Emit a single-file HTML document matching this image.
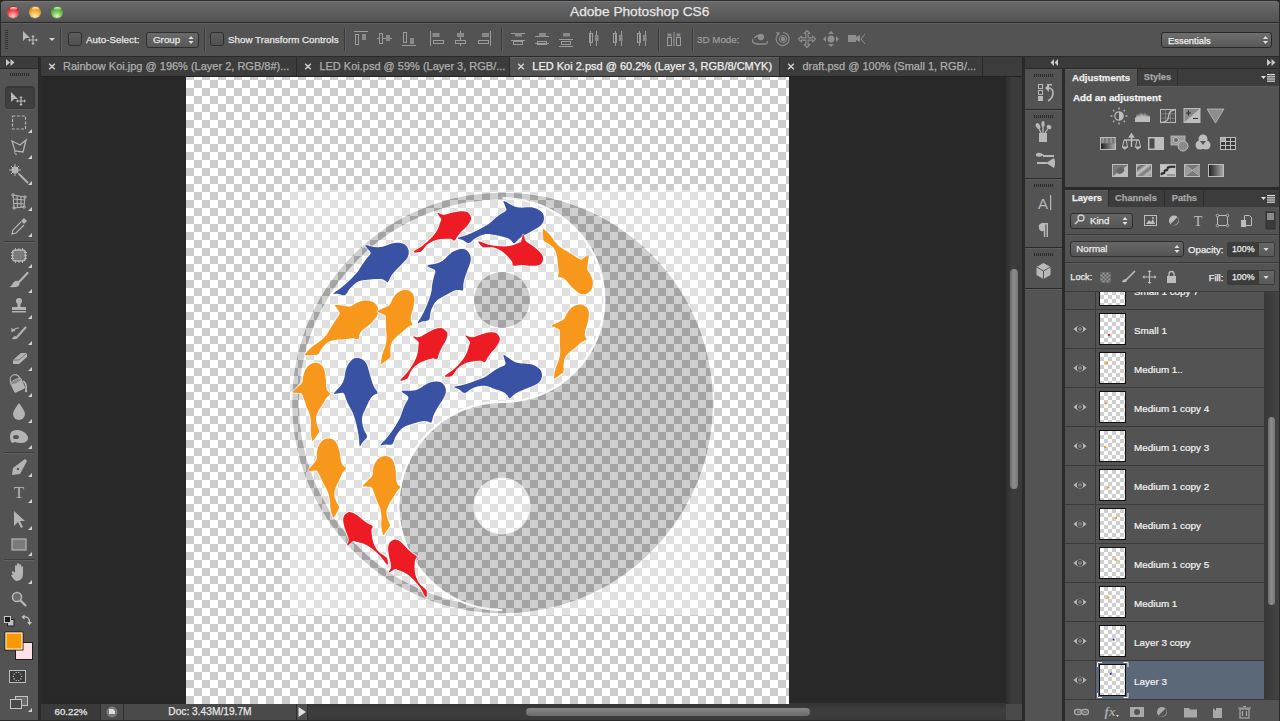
<!DOCTYPE html>
<html><head><meta charset="utf-8">
<style>
*{margin:0;padding:0;box-sizing:border-box}
html,body{width:1280px;height:721px;overflow:hidden;background:#282828;font-family:"Liberation Sans",sans-serif;font-size:11px;color:#e6e6e6}
.a{position:absolute}
.t{position:absolute;white-space:nowrap;line-height:1;-webkit-text-stroke-width:0.25px}
</style></head><body>
<div class="a" style="left:0px;top:0px;width:1280px;height:23px;background:#1e1e1e"></div>
<div class="a" style="left:0px;top:0px;width:1280px;height:22px;background:linear-gradient(#6a6a6a,#525252);border-top:1px solid #2e2e2e;border-radius:5px 5px 0 0;box-shadow:inset 0 1px 0 #777"></div>
<div class="a" style="left:0px;top:22px;width:1280px;height:1px;background:#2a2a2a"></div>
<div class="a" style="left:7px;top:6px;width:12px;height:12px;border-radius:50%;background:radial-gradient(circle at 50% 85%,#ffc8c8,#e8383a 55%,#8a1a16 100%);box-shadow:0 1px 0 rgba(255,255,255,0.18)"></div>
<div class="a" style="left:9.5px;top:6.8px;width:7px;height:3.2px;border-radius:50%;background:linear-gradient(rgba(255,255,255,0.9),rgba(255,255,255,0.1))"></div>
<div class="a" style="left:29px;top:6px;width:12px;height:12px;border-radius:50%;background:radial-gradient(circle at 50% 85%,#fff0a8,#eda22a 55%,#9a5e10 100%);box-shadow:0 1px 0 rgba(255,255,255,0.18)"></div>
<div class="a" style="left:31.5px;top:6.8px;width:7px;height:3.2px;border-radius:50%;background:linear-gradient(rgba(255,255,255,0.9),rgba(255,255,255,0.1))"></div>
<div class="a" style="left:51px;top:6px;width:12px;height:12px;border-radius:50%;background:radial-gradient(circle at 50% 85%,#d8f8b8,#5cb43a 55%,#2a6a16 100%);box-shadow:0 1px 0 rgba(255,255,255,0.18)"></div>
<div class="a" style="left:53.5px;top:6.8px;width:7px;height:3.2px;border-radius:50%;background:linear-gradient(rgba(255,255,255,0.9),rgba(255,255,255,0.1))"></div>
<div class="t" style="left:570px;top:5.30px;font-size:13.7px;color:#e6e6e6;font-weight:normal;">Adobe Photoshop CS6</div>
<div class="a" style="left:0px;top:23px;width:1280px;height:33px;background:#535353;border-top:1px solid #5f5f5f"></div>
<div class="a" style="left:0px;top:0px;width:1px;height:57px;background:#2a2a2a"></div>
<div class="a" style="left:1279px;top:0px;width:1px;height:57px;background:#2a2a2a"></div>
<div class="a" style="left:0px;top:56px;width:1280px;height:1px;background:#2a2a2a"></div>
<div class="a" style="left:60px;top:28px;width:1px;height:23px;background:#3a3a3a;box-shadow:1px 0 0 #606060"></div>
<div class="a" style="left:204px;top:28px;width:1px;height:23px;background:#3a3a3a;box-shadow:1px 0 0 #606060"></div>
<div class="a" style="left:344px;top:28px;width:1px;height:23px;background:#3a3a3a;box-shadow:1px 0 0 #606060"></div>
<div class="a" style="left:501px;top:28px;width:1px;height:23px;background:#3a3a3a;box-shadow:1px 0 0 #606060"></div>
<div class="a" style="left:658px;top:28px;width:1px;height:23px;background:#3a3a3a;box-shadow:1px 0 0 #606060"></div>
<div class="a" style="left:692px;top:28px;width:1px;height:23px;background:#3a3a3a;box-shadow:1px 0 0 #606060"></div>
<div class="a" style="left:68px;top:32px;width:14px;height:14px;border-radius:3px;border:1px solid #2e2e2e;background:linear-gradient(#5e5e5e,#505050)"></div>
<div class="t" style="left:86px;top:34.80px;font-size:9.8px;color:#e6e6e6;font-weight:normal;">Auto-Select:</div>
<div class="a" style="left:146px;top:32px;width:53px;height:16px;border-radius:3px;border:1px solid #2e2e2e;background:linear-gradient(#6a6a6a,#585858)"></div>
<div class="t" style="left:153px;top:34.80px;font-size:9.8px;color:#e6e6e6;font-weight:normal;">Group</div>
<div class="a" style="left:210px;top:32px;width:14px;height:14px;border-radius:3px;border:1px solid #2e2e2e;background:linear-gradient(#5e5e5e,#505050)"></div>
<div class="t" style="left:228px;top:34.80px;font-size:9.8px;color:#e6e6e6;font-weight:normal;">Show Transform Controls</div>
<div class="t" style="left:697px;top:34.80px;font-size:9.8px;color:#9a9a9a;font-weight:normal;">3D Mode:</div>
<div class="a" style="left:1161px;top:32px;width:111px;height:16px;border-radius:3px;border:1px solid #2a2a2a;background:linear-gradient(#6e6e6e,#585858)"></div>
<div class="t" style="left:1168px;top:36.14px;font-size:9.4px;color:#f0f0f0;font-weight:normal;">Essentials</div>
<div class="a" style="left:0px;top:57px;width:38px;height:664px;background:#535353"></div>
<div class="a" style="left:0px;top:57px;width:38px;height:11px;background:#3c3c3c"></div>
<div class="a" style="left:0px;top:68px;width:38px;height:1px;background:#2c2c2c"></div>
<div class="a" style="left:38px;top:57px;width:3px;height:664px;background:#2a2a2a"></div>
<div class="a" style="left:5px;top:86px;width:30px;height:23px;border-radius:3px;background:#3f3f3f;border:1px solid #383838;box-shadow:inset 0 1px 0 #353535, 0 1px 0 #5e5e5e"></div>
<div class="a" style="left:4px;top:241px;width:30px;height:1px;background:#3c3c3c;box-shadow:0 1px 0 #606060"></div>
<div class="a" style="left:4px;top:452px;width:30px;height:1px;background:#3c3c3c;box-shadow:0 1px 0 #606060"></div>
<div class="a" style="left:4px;top:559px;width:30px;height:1px;background:#3c3c3c;box-shadow:0 1px 0 #606060"></div>
<div class="a" style="left:41px;top:57px;width:981px;height:19px;background:#3c3c3c"></div>
<div class="a" style="left:41px;top:76px;width:981px;height:1px;background:#232323"></div>
<div class="a" style="left:296px;top:57px;width:1px;height:19px;background:#2a2a2a"></div>
<div class="a" style="left:509px;top:57px;width:1px;height:19px;background:#2a2a2a"></div>
<div class="a" style="left:779px;top:57px;width:1px;height:19px;background:#2a2a2a"></div>
<div class="a" style="left:982px;top:57px;width:1px;height:19px;background:#2a2a2a"></div>
<div class="a" style="left:510px;top:57px;width:269px;height:19px;background:#535353;border-top:1px solid #606060"></div>
<div class="t" style="left:63px;top:61.19px;font-size:11px;color:#aeaeae;font-weight:normal;">Rainbow Koi.jpg @ 196% (Layer 2, RGB/8#)...</div>
<div class="t" style="left:319.4px;top:61.19px;font-size:11px;color:#aeaeae;font-weight:normal;">LED Koi.psd @ 59% (Layer 3, RGB/...</div>
<div class="t" style="left:532.3px;top:61.19px;font-size:11px;color:#f0f0f0;font-weight:normal;">LED Koi 2.psd @ 60.2% (Layer 3, RGB/8/CMYK)</div>
<div class="t" style="left:802.4px;top:61.19px;font-size:11px;color:#aeaeae;font-weight:normal;">draft.psd @ 100% (Small 1, RGB/...</div>
<div class="a" style="left:1006px;top:77px;width:16px;height:627px;background:linear-gradient(90deg,#2e2e2e,#3c3c3c 40%,#3a3a3a)"></div>
<div class="a" style="left:1010px;top:269px;width:8px;height:220px;border-radius:4px;background:linear-gradient(90deg,#6e6e6e,#8c8c8c 50%,#767676)"></div>
<div class="a" style="left:41px;top:703px;width:965px;height:18px;background:linear-gradient(#333,#3e3e3e 40%,#3a3a3a)"></div>
<div class="a" style="left:41px;top:703px;width:259px;height:1px;background:#262626"></div>
<div class="a" style="left:41px;top:704px;width:59px;height:16px;background:#3a3a3a"></div>
<div class="a" style="left:100px;top:704px;width:24px;height:16px;background:#4a4a4a;border-left:1px solid #2e2e2e;border-right:1px solid #2e2e2e"></div>
<div class="a" style="left:124px;top:704px;width:172px;height:16px;background:#4a4a4a"></div>
<div class="a" style="left:296px;top:704px;width:12px;height:16px;background:#4e4e4e;border-left:1px solid #2e2e2e;border-right:1px solid #2e2e2e"></div>
<div class="a" style="left:526px;top:708px;width:284px;height:8px;border-radius:4px;background:linear-gradient(#858585,#6c6c6c)"></div>
<div class="a" style="left:1006px;top:704px;width:16px;height:16px;background:#4a4a4a"></div>
<div class="a" style="left:0px;top:720px;width:1022px;height:1px;background:#2a2a2a"></div>
<div class="t" style="left:54.6px;top:707.09px;font-size:9.7px;color:#e6e6e6;font-weight:normal;">60.22%</div>
<div class="t" style="left:168.3px;top:706.67px;font-size:10.2px;color:#e6e6e6;font-weight:normal;">Doc: 3.43M/19.7M</div>
<div class="a" style="left:1022px;top:57px;width:258px;height:664px;background:#2a2a2a"></div>
<div class="a" style="left:1025px;top:57px;width:254px;height:11px;background:#3a3a3a"></div>
<div class="a" style="left:1025px;top:69px;width:37px;height:652px;background:#535353"></div>
<div class="a" style="left:1025px;top:109px;width:37px;height:1px;background:#2a2a2a"></div>
<div class="a" style="left:1025px;top:110px;width:37px;height:1px;background:#5e5e5e"></div>
<div class="a" style="left:1025px;top:178px;width:37px;height:1px;background:#2a2a2a"></div>
<div class="a" style="left:1025px;top:179px;width:37px;height:1px;background:#5e5e5e"></div>
<div class="a" style="left:1025px;top:247px;width:37px;height:1px;background:#2a2a2a"></div>
<div class="a" style="left:1025px;top:248px;width:37px;height:1px;background:#5e5e5e"></div>
<div class="a" style="left:1025px;top:288px;width:37px;height:1px;background:#2a2a2a"></div>
<div class="a" style="left:1025px;top:289px;width:37px;height:1px;background:#5e5e5e"></div>
<div class="a" style="left:1279px;top:57px;width:1px;height:664px;background:#2a2a2a"></div>
<div class="a" style="left:1065px;top:69px;width:214px;height:17px;background:#3c3c3c"></div>
<div class="a" style="left:1065px;top:69px;width:72px;height:18px;background:#535353;border-top:1px solid #5e5e5e"></div>
<div class="a" style="left:1137px;top:69px;width:1px;height:17px;background:#2e2e2e"></div>
<div class="a" style="left:1177px;top:69px;width:1px;height:17px;background:#2e2e2e"></div>
<div class="a" style="left:1065px;top:86px;width:214px;height:101px;background:#535353"></div>
<div class="a" style="left:1138px;top:86px;width:141px;height:1px;background:#5a5a5a"></div>
<div class="t" style="left:1072px;top:72.52px;font-size:9.6px;color:#ececec;font-weight:bold;">Adjustments</div>
<div class="t" style="left:1143.7px;top:72.78px;font-size:9.3px;color:#a6a6a6;font-weight:bold;">Styles</div>
<div class="t" style="left:1073px;top:92.50px;font-size:9.8px;color:#f2f2f2;font-weight:bold;">Add an adjustment</div>
<div class="a" style="left:1065px;top:190px;width:214px;height:17px;background:#3c3c3c"></div>
<div class="a" style="left:1065px;top:190px;width:43px;height:18px;background:#535353;border-top:1px solid #5e5e5e"></div>
<div class="a" style="left:1108px;top:190px;width:1px;height:17px;background:#2e2e2e"></div>
<div class="a" style="left:1164px;top:190px;width:1px;height:17px;background:#2e2e2e"></div>
<div class="a" style="left:1203px;top:190px;width:1px;height:17px;background:#2e2e2e"></div>
<div class="a" style="left:1065px;top:207px;width:214px;height:514px;background:#535353"></div>
<div class="t" style="left:1072px;top:194.13px;font-size:9.3px;color:#ececec;font-weight:bold;">Layers</div>
<div class="t" style="left:1115px;top:194.13px;font-size:9.3px;color:#a6a6a6;font-weight:bold;">Channels</div>
<div class="t" style="left:1171.7px;top:194.13px;font-size:9.3px;color:#a6a6a6;font-weight:bold;">Paths</div>
<div class="a" style="left:1065px;top:234px;width:214px;height:1px;background:#3a3a3a"></div>
<div class="a" style="left:1065px;top:235px;width:214px;height:1px;background:#5c5c5c"></div>
<div class="a" style="left:1065px;top:262px;width:214px;height:1px;background:#3a3a3a"></div>
<div class="a" style="left:1065px;top:263px;width:214px;height:1px;background:#5c5c5c"></div>
<div class="a" style="left:1065px;top:291px;width:214px;height:1px;background:#3a3a3a"></div>
<div class="a" style="left:1065px;top:292px;width:214px;height:1px;background:#5c5c5c"></div>
<div class="a" style="left:1070px;top:213px;width:63px;height:16px;border-radius:3px;border:1px solid #2e2e2e;background:linear-gradient(#666,#555)"></div>
<div class="t" style="left:1090px;top:215.59px;font-size:9.7px;color:#ececec;font-weight:normal;">Kind</div>
<div class="a" style="left:1070px;top:241px;width:114px;height:16px;border-radius:3px;border:1px solid #2e2e2e;background:linear-gradient(#666,#555)"></div>
<div class="t" style="left:1076.3px;top:243.59px;font-size:9.7px;color:#ececec;font-weight:normal;">Normal</div>
<div class="t" style="left:1188px;top:244.79px;font-size:9.7px;color:#ececec;font-weight:normal;">Opacity:</div>
<div class="t" style="left:1070.3px;top:272.71px;font-size:9.2px;color:#ececec;font-weight:normal;">Lock:</div>
<div class="t" style="left:1208.7px;top:272.54px;font-size:9.4px;color:#ececec;font-weight:normal;">Fill:</div>
<div class="a" style="left:1227px;top:242px;width:48px;height:15px;border-radius:2px;border:1px solid #3a3a3a;background:#3c3c3c"></div>
<div class="a" style="left:1259px;top:243px;width:15px;height:13px;background:linear-gradient(#666,#5a5a5a)"></div>
<div class="a" style="left:1227px;top:270px;width:48px;height:15px;border-radius:2px;border:1px solid #3a3a3a;background:#3c3c3c"></div>
<div class="a" style="left:1259px;top:271px;width:15px;height:13px;background:linear-gradient(#666,#5a5a5a)"></div>
<div class="t" style="left:1231.9px;top:245.47px;font-size:8.9px;color:#ececec;font-weight:normal;">100%</div>
<div class="t" style="left:1231.9px;top:272.97px;font-size:8.9px;color:#ececec;font-weight:normal;">100%</div>
<div class="a" style="left:1065px;top:292px;width:199px;height:407px;overflow:hidden">
<div class="a" style="left:0;top:-21px;width:199px;height:38px;background:#535353"></div>
<div class="a" style="left:0;top:17px;width:199px;height:1px;background:#3a3a3a"></div>
<div class="a" style="left:30px;top:-21px;width:1px;height:38px;background:#3a3a3a"></div>
<div class="a" style="left:34px;top:-18px;width:27px;height:32px;border:1.5px solid #111;background-color:#fff;background-image:linear-gradient(45deg,#cfcfcf 25%,transparent 25%,transparent 75%,#cfcfcf 75%),linear-gradient(45deg,#cfcfcf 25%,transparent 25%,transparent 75%,#cfcfcf 75%);background-size:8px 8px;background-position:0 0,4px 4px"></div>
<div class="t" style="left:69px;top:-5.38px;font-size:9.9px;color:#f4f4f4;-webkit-text-stroke:0.2px #f4f4f4">Small 1 copy 7</div>
<div class="a" style="left:0;top:18px;width:199px;height:38px;background:#535353"></div>
<div class="a" style="left:0;top:56px;width:199px;height:1px;background:#3a3a3a"></div>
<div class="a" style="left:30px;top:18px;width:1px;height:38px;background:#3a3a3a"></div>
<div class="a" style="left:34px;top:21px;width:27px;height:32px;border:1.5px solid #111;background-color:#fff;background-image:linear-gradient(45deg,#cfcfcf 25%,transparent 25%,transparent 75%,#cfcfcf 75%),linear-gradient(45deg,#cfcfcf 25%,transparent 25%,transparent 75%,#cfcfcf 75%);background-size:8px 8px;background-position:0 0,4px 4px"></div>
<div class="t" style="left:69px;top:33.62px;font-size:9.9px;color:#f4f4f4;-webkit-text-stroke:0.2px #f4f4f4">Small 1</div>
<div class="a" style="left:0;top:57px;width:199px;height:38px;background:#535353"></div>
<div class="a" style="left:0;top:95px;width:199px;height:1px;background:#3a3a3a"></div>
<div class="a" style="left:30px;top:57px;width:1px;height:38px;background:#3a3a3a"></div>
<div class="a" style="left:34px;top:60px;width:27px;height:32px;border:1.5px solid #111;background-color:#fff;background-image:linear-gradient(45deg,#cfcfcf 25%,transparent 25%,transparent 75%,#cfcfcf 75%),linear-gradient(45deg,#cfcfcf 25%,transparent 25%,transparent 75%,#cfcfcf 75%);background-size:8px 8px;background-position:0 0,4px 4px"></div>
<div class="t" style="left:69px;top:72.62px;font-size:9.9px;color:#f4f4f4;-webkit-text-stroke:0.2px #f4f4f4">Medium 1..</div>
<div class="a" style="left:0;top:96px;width:199px;height:38px;background:#535353"></div>
<div class="a" style="left:0;top:134px;width:199px;height:1px;background:#3a3a3a"></div>
<div class="a" style="left:30px;top:96px;width:1px;height:38px;background:#3a3a3a"></div>
<div class="a" style="left:34px;top:99px;width:27px;height:32px;border:1.5px solid #111;background-color:#fff;background-image:linear-gradient(45deg,#cfcfcf 25%,transparent 25%,transparent 75%,#cfcfcf 75%),linear-gradient(45deg,#cfcfcf 25%,transparent 25%,transparent 75%,#cfcfcf 75%);background-size:8px 8px;background-position:0 0,4px 4px"></div>
<div class="t" style="left:69px;top:111.62px;font-size:9.9px;color:#f4f4f4;-webkit-text-stroke:0.2px #f4f4f4">Medium 1 copy 4</div>
<div class="a" style="left:0;top:135px;width:199px;height:38px;background:#535353"></div>
<div class="a" style="left:0;top:173px;width:199px;height:1px;background:#3a3a3a"></div>
<div class="a" style="left:30px;top:135px;width:1px;height:38px;background:#3a3a3a"></div>
<div class="a" style="left:34px;top:138px;width:27px;height:32px;border:1.5px solid #111;background-color:#fff;background-image:linear-gradient(45deg,#cfcfcf 25%,transparent 25%,transparent 75%,#cfcfcf 75%),linear-gradient(45deg,#cfcfcf 25%,transparent 25%,transparent 75%,#cfcfcf 75%);background-size:8px 8px;background-position:0 0,4px 4px"></div>
<div class="t" style="left:69px;top:150.62px;font-size:9.9px;color:#f4f4f4;-webkit-text-stroke:0.2px #f4f4f4">Medium 1 copy 3</div>
<div class="a" style="left:0;top:174px;width:199px;height:38px;background:#535353"></div>
<div class="a" style="left:0;top:212px;width:199px;height:1px;background:#3a3a3a"></div>
<div class="a" style="left:30px;top:174px;width:1px;height:38px;background:#3a3a3a"></div>
<div class="a" style="left:34px;top:177px;width:27px;height:32px;border:1.5px solid #111;background-color:#fff;background-image:linear-gradient(45deg,#cfcfcf 25%,transparent 25%,transparent 75%,#cfcfcf 75%),linear-gradient(45deg,#cfcfcf 25%,transparent 25%,transparent 75%,#cfcfcf 75%);background-size:8px 8px;background-position:0 0,4px 4px"></div>
<div class="t" style="left:69px;top:189.62px;font-size:9.9px;color:#f4f4f4;-webkit-text-stroke:0.2px #f4f4f4">Medium 1 copy 2</div>
<div class="a" style="left:0;top:213px;width:199px;height:38px;background:#535353"></div>
<div class="a" style="left:0;top:251px;width:199px;height:1px;background:#3a3a3a"></div>
<div class="a" style="left:30px;top:213px;width:1px;height:38px;background:#3a3a3a"></div>
<div class="a" style="left:34px;top:216px;width:27px;height:32px;border:1.5px solid #111;background-color:#fff;background-image:linear-gradient(45deg,#cfcfcf 25%,transparent 25%,transparent 75%,#cfcfcf 75%),linear-gradient(45deg,#cfcfcf 25%,transparent 25%,transparent 75%,#cfcfcf 75%);background-size:8px 8px;background-position:0 0,4px 4px"></div>
<div class="t" style="left:69px;top:228.62px;font-size:9.9px;color:#f4f4f4;-webkit-text-stroke:0.2px #f4f4f4">Medium 1 copy</div>
<div class="a" style="left:0;top:252px;width:199px;height:38px;background:#535353"></div>
<div class="a" style="left:0;top:290px;width:199px;height:1px;background:#3a3a3a"></div>
<div class="a" style="left:30px;top:252px;width:1px;height:38px;background:#3a3a3a"></div>
<div class="a" style="left:34px;top:255px;width:27px;height:32px;border:1.5px solid #111;background-color:#fff;background-image:linear-gradient(45deg,#cfcfcf 25%,transparent 25%,transparent 75%,#cfcfcf 75%),linear-gradient(45deg,#cfcfcf 25%,transparent 25%,transparent 75%,#cfcfcf 75%);background-size:8px 8px;background-position:0 0,4px 4px"></div>
<div class="t" style="left:69px;top:267.62px;font-size:9.9px;color:#f4f4f4;-webkit-text-stroke:0.2px #f4f4f4">Medium 1 copy 5</div>
<div class="a" style="left:0;top:291px;width:199px;height:38px;background:#535353"></div>
<div class="a" style="left:0;top:329px;width:199px;height:1px;background:#3a3a3a"></div>
<div class="a" style="left:30px;top:291px;width:1px;height:38px;background:#3a3a3a"></div>
<div class="a" style="left:34px;top:294px;width:27px;height:32px;border:1.5px solid #111;background-color:#fff;background-image:linear-gradient(45deg,#cfcfcf 25%,transparent 25%,transparent 75%,#cfcfcf 75%),linear-gradient(45deg,#cfcfcf 25%,transparent 25%,transparent 75%,#cfcfcf 75%);background-size:8px 8px;background-position:0 0,4px 4px"></div>
<div class="t" style="left:69px;top:306.62px;font-size:9.9px;color:#f4f4f4;-webkit-text-stroke:0.2px #f4f4f4">Medium 1</div>
<div class="a" style="left:0;top:330px;width:199px;height:38px;background:#535353"></div>
<div class="a" style="left:0;top:368px;width:199px;height:1px;background:#3a3a3a"></div>
<div class="a" style="left:30px;top:330px;width:1px;height:38px;background:#3a3a3a"></div>
<div class="a" style="left:34px;top:333px;width:27px;height:32px;border:1.5px solid #111;background-color:#fff;background-image:linear-gradient(45deg,#cfcfcf 25%,transparent 25%,transparent 75%,#cfcfcf 75%),linear-gradient(45deg,#cfcfcf 25%,transparent 25%,transparent 75%,#cfcfcf 75%);background-size:8px 8px;background-position:0 0,4px 4px"></div>
<div class="t" style="left:69px;top:345.62px;font-size:9.9px;color:#f4f4f4;-webkit-text-stroke:0.2px #f4f4f4">Layer 3 copy</div>
<div class="a" style="left:0;top:369px;width:199px;height:38px;background:#535353"></div>
<div class="a" style="left:31px;top:369px;width:168px;height:38px;background:#5b6877"></div>
<div class="a" style="left:0;top:407px;width:199px;height:1px;background:#3a3a3a"></div>
<div class="a" style="left:30px;top:369px;width:1px;height:38px;background:#3a3a3a"></div>
<div class="a" style="left:34px;top:372px;width:27px;height:32px;border:1.5px solid #111;background-color:#fff;background-image:linear-gradient(45deg,#cfcfcf 25%,transparent 25%,transparent 75%,#cfcfcf 75%),linear-gradient(45deg,#cfcfcf 25%,transparent 25%,transparent 75%,#cfcfcf 75%);background-size:8px 8px;background-position:0 0,4px 4px"></div>
<div class="t" style="left:69px;top:384.62px;font-size:9.9px;color:#f4f4f4;-webkit-text-stroke:0.2px #f4f4f4">Layer 3</div>
</div>
<div class="a" style="left:1264px;top:292px;width:15px;height:407px;background:linear-gradient(90deg,#383838,#444)"></div>
<div class="a" style="left:1268px;top:417px;width:7px;height:188px;border-radius:4px;background:linear-gradient(90deg,#6e6e6e,#8c8c8c 50%,#767676)"></div>
<div class="a" style="left:1065px;top:699px;width:214px;height:1px;background:#3a3a3a"></div>
<div class="a" style="left:1065px;top:700px;width:214px;height:21px;background:#535353"></div>
<svg class="a" width="603" height="627" viewBox="186 77 603 627" style="left:186px;top:77px">
<defs>
<pattern id="ck" x="186" y="72" width="16" height="16" patternUnits="userSpaceOnUse"><rect width="16" height="16" fill="#fff"/><rect width="8" height="8" fill="#ccc"/><rect x="8" y="8" width="8" height="8" fill="#ccc"/></pattern>
<pattern id="ckl" x="186" y="72" width="16" height="16" patternUnits="userSpaceOnUse"><rect width="16" height="16" fill="#fff"/><rect width="8" height="8" fill="#e0e0e0"/><rect x="8" y="8" width="8" height="8" fill="#e0e0e0"/></pattern>
<pattern id="ckd" x="186" y="72" width="16" height="16" patternUnits="userSpaceOnUse"><rect width="16" height="16" fill="#cfcfcf"/><rect width="8" height="8" fill="#a4a4a4"/><rect x="8" y="8" width="8" height="8" fill="#a4a4a4"/></pattern>
<filter id="bl" x="-20%" y="-20%" width="140%" height="140%"><feGaussianBlur stdDeviation="1"/></filter><filter id="bl2" x="-20%" y="-20%" width="140%" height="140%"><feGaussianBlur stdDeviation="0.5"/></filter>
</defs>
<rect x="186" y="77" width="603" height="627" fill="url(#ck)"/>
<rect x="290" y="190" width="424.5" height="425" fill="url(#ckl)"/>
<circle cx="502.5" cy="403" r="207" fill="none" stroke="url(#ckd)" stroke-width="6.5"/>
<path d="M502.5,609 A103,103 0 0 1 502.5,403 A103,103 0 0 0 502.5,197" fill="none" stroke="#fff" stroke-opacity="0.85" stroke-width="4.5" filter="url(#bl2)"/>
<path d="M502.5,193 A210,210 0 0 1 502.5,613 L502.5,609 A103,103 0 0 1 502.5,403 A103,103 0 0 0 502.5,197 Z" fill="url(#ckd)"/>
<circle cx="502" cy="300" r="28" fill="url(#ckd)"/>
<circle cx="502" cy="506" r="28.5" fill="#fff" fill-opacity="0.7" filter="url(#bl2)"/>
<circle cx="502" cy="506" r="27.5" fill="url(#ckl)"/>
<g transform="translate(413.8,251.7) rotate(-30.94) scale(66.52)"><path d="M0.000,0.000 C-0.015,0.011 0.055,0.046 0.078,0.054 C0.101,0.062 0.101,0.054 0.126,0.047 C0.151,0.040 0.186,0.022 0.219,0.015 C0.252,0.008 0.273,0.006 0.310,0.010 C0.347,0.014 0.379,0.018 0.426,0.037 C0.473,0.056 0.537,0.092 0.570,0.116 C0.603,0.140 0.589,0.166 0.611,0.170 C0.633,0.174 0.659,0.148 0.690,0.136 C0.721,0.124 0.748,0.114 0.783,0.104 C0.818,0.094 0.853,0.091 0.886,0.079 C0.919,0.067 0.947,0.056 0.969,0.040 C0.991,0.024 1.002,0.014 1.007,-0.011 C1.011,-0.036 1.011,-0.072 0.994,-0.099 C0.977,-0.126 0.950,-0.143 0.914,-0.162 C0.878,-0.181 0.837,-0.191 0.793,-0.206 C0.749,-0.221 0.703,-0.224 0.669,-0.244 C0.635,-0.264 0.616,-0.325 0.604,-0.319 C0.592,-0.313 0.611,-0.235 0.604,-0.209 C0.597,-0.183 0.593,-0.194 0.567,-0.173 C0.541,-0.152 0.503,-0.115 0.459,-0.091 C0.415,-0.067 0.379,-0.054 0.325,-0.039 C0.271,-0.024 0.217,-0.014 0.159,-0.007 C0.101,0.000 0.015,-0.011 0.000,0.000Z" fill="#ed1c24" stroke="#fff" stroke-opacity="0.55" stroke-width="0.0331" stroke-linejoin="round" paint-order="stroke"/></g>
<g transform="translate(458.1,238.5) rotate(-12.99) scale(88.10)"><path d="M0.000,0.000 C0.005,0.007 0.028,0.015 0.047,0.029 C0.066,0.043 0.081,0.075 0.106,0.078 C0.131,0.081 0.156,0.053 0.186,0.043 C0.216,0.033 0.242,0.025 0.270,0.022 C0.298,0.019 0.314,0.019 0.341,0.025 C0.368,0.031 0.392,0.044 0.422,0.058 C0.452,0.072 0.486,0.087 0.510,0.100 C0.534,0.113 0.544,0.118 0.557,0.129 C0.571,0.140 0.576,0.150 0.585,0.162 C0.594,0.174 0.594,0.198 0.608,0.198 C0.622,0.198 0.643,0.175 0.665,0.163 C0.688,0.151 0.705,0.144 0.733,0.134 C0.761,0.124 0.788,0.118 0.819,0.109 C0.850,0.100 0.879,0.095 0.905,0.085 C0.931,0.075 0.948,0.069 0.965,0.054 C0.982,0.039 0.994,0.021 1.000,0.000 C1.006,-0.021 1.007,-0.042 1.001,-0.062 C0.995,-0.082 0.985,-0.094 0.968,-0.110 C0.951,-0.126 0.929,-0.140 0.906,-0.151 C0.883,-0.162 0.863,-0.164 0.839,-0.170 C0.815,-0.176 0.795,-0.175 0.771,-0.182 C0.747,-0.189 0.728,-0.196 0.706,-0.210 C0.684,-0.224 0.666,-0.243 0.647,-0.259 C0.628,-0.275 0.606,-0.300 0.598,-0.297 C0.590,-0.294 0.602,-0.262 0.603,-0.243 C0.604,-0.224 0.616,-0.204 0.604,-0.189 C0.592,-0.174 0.562,-0.172 0.535,-0.161 C0.508,-0.150 0.485,-0.140 0.456,-0.126 C0.427,-0.112 0.407,-0.096 0.375,-0.082 C0.343,-0.069 0.312,-0.061 0.278,-0.051 C0.244,-0.041 0.217,-0.036 0.184,-0.029 C0.151,-0.022 0.122,-0.018 0.092,-0.014 C0.062,-0.010 0.037,-0.012 0.020,-0.009 C0.003,-0.006 -0.005,-0.007 0.000,0.000Z" fill="#3a52a3" stroke="#fff" stroke-opacity="0.55" stroke-width="0.0250" stroke-linejoin="round" paint-order="stroke"/></g>
<g transform="translate(478.6,241.6) rotate(19.20) scale(66.29)"><path d="M0.000,0.000 C-0.015,0.011 0.055,0.046 0.078,0.054 C0.101,0.062 0.101,0.054 0.126,0.047 C0.151,0.040 0.186,0.022 0.219,0.015 C0.252,0.008 0.273,0.006 0.310,0.010 C0.347,0.014 0.379,0.018 0.426,0.037 C0.473,0.056 0.537,0.092 0.570,0.116 C0.603,0.140 0.589,0.166 0.611,0.170 C0.633,0.174 0.659,0.148 0.690,0.136 C0.721,0.124 0.748,0.114 0.783,0.104 C0.818,0.094 0.853,0.091 0.886,0.079 C0.919,0.067 0.947,0.056 0.969,0.040 C0.991,0.024 1.002,0.014 1.007,-0.011 C1.011,-0.036 1.011,-0.072 0.994,-0.099 C0.977,-0.126 0.950,-0.143 0.914,-0.162 C0.878,-0.181 0.837,-0.191 0.793,-0.206 C0.749,-0.221 0.703,-0.224 0.669,-0.244 C0.635,-0.264 0.616,-0.325 0.604,-0.319 C0.592,-0.313 0.611,-0.235 0.604,-0.209 C0.597,-0.183 0.593,-0.194 0.567,-0.173 C0.541,-0.152 0.503,-0.115 0.459,-0.091 C0.415,-0.067 0.379,-0.054 0.325,-0.039 C0.271,-0.024 0.217,-0.014 0.159,-0.007 C0.101,0.000 0.015,-0.011 0.000,0.000Z" fill="#ed1c24" stroke="#fff" stroke-opacity="0.55" stroke-width="0.0332" stroke-linejoin="round" paint-order="stroke"/></g>
<g transform="translate(543.0,229.4) rotate(53.69) scale(77.68)"><path d="M0.000,0.000 C0.008,0.013 0.056,0.041 0.078,0.055 C0.101,0.069 0.103,0.079 0.125,0.078 C0.147,0.077 0.172,0.055 0.203,0.047 C0.234,0.039 0.263,0.028 0.297,0.031 C0.331,0.034 0.360,0.049 0.391,0.063 C0.422,0.077 0.439,0.092 0.469,0.109 C0.499,0.126 0.530,0.139 0.555,0.156 C0.580,0.173 0.594,0.200 0.609,0.203 C0.624,0.206 0.624,0.182 0.641,0.172 C0.658,0.162 0.672,0.154 0.703,0.148 C0.734,0.142 0.771,0.148 0.813,0.141 C0.855,0.134 0.906,0.124 0.938,0.109 C0.970,0.094 0.981,0.077 0.992,0.055 C1.003,0.033 1.004,0.008 1.000,-0.016 C0.996,-0.040 0.986,-0.058 0.969,-0.078 C0.952,-0.098 0.931,-0.112 0.906,-0.125 C0.881,-0.138 0.856,-0.142 0.828,-0.148 C0.800,-0.154 0.775,-0.145 0.750,-0.156 C0.725,-0.167 0.711,-0.190 0.687,-0.211 C0.663,-0.232 0.631,-0.272 0.617,-0.273 C0.603,-0.274 0.612,-0.239 0.609,-0.219 C0.606,-0.199 0.615,-0.179 0.602,-0.164 C0.589,-0.149 0.569,-0.146 0.539,-0.133 C0.509,-0.120 0.476,-0.109 0.438,-0.094 C0.400,-0.079 0.365,-0.058 0.328,-0.047 C0.291,-0.036 0.271,-0.034 0.234,-0.031 C0.197,-0.028 0.162,-0.034 0.125,-0.031 C0.088,-0.028 0.053,-0.022 0.031,-0.016 C0.009,-0.010 -0.008,-0.013 0.000,0.000Z" fill="#f7981d" stroke="#fff" stroke-opacity="0.55" stroke-width="0.0283" stroke-linejoin="round" paint-order="stroke"/></g>
<g transform="translate(333.7,293.8) rotate(-30.29) scale(86.63)"><path d="M0.000,0.000 C0.005,0.007 0.028,0.015 0.047,0.029 C0.066,0.043 0.081,0.075 0.106,0.078 C0.131,0.081 0.156,0.053 0.186,0.043 C0.216,0.033 0.242,0.025 0.270,0.022 C0.298,0.019 0.314,0.019 0.341,0.025 C0.368,0.031 0.392,0.044 0.422,0.058 C0.452,0.072 0.486,0.087 0.510,0.100 C0.534,0.113 0.544,0.118 0.557,0.129 C0.571,0.140 0.576,0.150 0.585,0.162 C0.594,0.174 0.594,0.198 0.608,0.198 C0.622,0.198 0.643,0.175 0.665,0.163 C0.688,0.151 0.705,0.144 0.733,0.134 C0.761,0.124 0.788,0.118 0.819,0.109 C0.850,0.100 0.879,0.095 0.905,0.085 C0.931,0.075 0.948,0.069 0.965,0.054 C0.982,0.039 0.994,0.021 1.000,0.000 C1.006,-0.021 1.007,-0.042 1.001,-0.062 C0.995,-0.082 0.985,-0.094 0.968,-0.110 C0.951,-0.126 0.929,-0.140 0.906,-0.151 C0.883,-0.162 0.863,-0.164 0.839,-0.170 C0.815,-0.176 0.795,-0.175 0.771,-0.182 C0.747,-0.189 0.728,-0.196 0.706,-0.210 C0.684,-0.224 0.666,-0.243 0.647,-0.259 C0.628,-0.275 0.606,-0.300 0.598,-0.297 C0.590,-0.294 0.602,-0.262 0.603,-0.243 C0.604,-0.224 0.616,-0.204 0.604,-0.189 C0.592,-0.174 0.562,-0.172 0.535,-0.161 C0.508,-0.150 0.485,-0.140 0.456,-0.126 C0.427,-0.112 0.407,-0.096 0.375,-0.082 C0.343,-0.069 0.312,-0.061 0.278,-0.051 C0.244,-0.041 0.217,-0.036 0.184,-0.029 C0.151,-0.022 0.122,-0.018 0.092,-0.014 C0.062,-0.010 0.037,-0.012 0.020,-0.009 C0.003,-0.006 -0.005,-0.007 0.000,0.000Z" fill="#3a52a3" stroke="#fff" stroke-opacity="0.55" stroke-width="0.0254" stroke-linejoin="round" paint-order="stroke"/></g>
<g transform="translate(418.1,323.2) rotate(-54.41) scale(86.94)"><path d="M0.000,0.000 C0.005,0.007 0.028,0.015 0.047,0.029 C0.066,0.043 0.081,0.075 0.106,0.078 C0.131,0.081 0.156,0.053 0.186,0.043 C0.216,0.033 0.242,0.025 0.270,0.022 C0.298,0.019 0.314,0.019 0.341,0.025 C0.368,0.031 0.392,0.044 0.422,0.058 C0.452,0.072 0.486,0.087 0.510,0.100 C0.534,0.113 0.544,0.118 0.557,0.129 C0.571,0.140 0.576,0.150 0.585,0.162 C0.594,0.174 0.594,0.198 0.608,0.198 C0.622,0.198 0.643,0.175 0.665,0.163 C0.688,0.151 0.705,0.144 0.733,0.134 C0.761,0.124 0.788,0.118 0.819,0.109 C0.850,0.100 0.879,0.095 0.905,0.085 C0.931,0.075 0.948,0.069 0.965,0.054 C0.982,0.039 0.994,0.021 1.000,0.000 C1.006,-0.021 1.007,-0.042 1.001,-0.062 C0.995,-0.082 0.985,-0.094 0.968,-0.110 C0.951,-0.126 0.929,-0.140 0.906,-0.151 C0.883,-0.162 0.863,-0.164 0.839,-0.170 C0.815,-0.176 0.795,-0.175 0.771,-0.182 C0.747,-0.189 0.728,-0.196 0.706,-0.210 C0.684,-0.224 0.666,-0.243 0.647,-0.259 C0.628,-0.275 0.606,-0.300 0.598,-0.297 C0.590,-0.294 0.602,-0.262 0.603,-0.243 C0.604,-0.224 0.616,-0.204 0.604,-0.189 C0.592,-0.174 0.562,-0.172 0.535,-0.161 C0.508,-0.150 0.485,-0.140 0.456,-0.126 C0.427,-0.112 0.407,-0.096 0.375,-0.082 C0.343,-0.069 0.312,-0.061 0.278,-0.051 C0.244,-0.041 0.217,-0.036 0.184,-0.029 C0.151,-0.022 0.122,-0.018 0.092,-0.014 C0.062,-0.010 0.037,-0.012 0.020,-0.009 C0.003,-0.006 -0.005,-0.007 0.000,0.000Z" fill="#3a52a3" stroke="#fff" stroke-opacity="0.55" stroke-width="0.0253" stroke-linejoin="round" paint-order="stroke"/></g>
<g transform="translate(305.3,354.9) rotate(-35.21) scale(86.54)"><path d="M0.000,0.000 C0.008,0.013 0.056,0.041 0.078,0.055 C0.101,0.069 0.103,0.079 0.125,0.078 C0.147,0.077 0.172,0.055 0.203,0.047 C0.234,0.039 0.263,0.028 0.297,0.031 C0.331,0.034 0.360,0.049 0.391,0.063 C0.422,0.077 0.439,0.092 0.469,0.109 C0.499,0.126 0.530,0.139 0.555,0.156 C0.580,0.173 0.594,0.200 0.609,0.203 C0.624,0.206 0.624,0.182 0.641,0.172 C0.658,0.162 0.672,0.154 0.703,0.148 C0.734,0.142 0.771,0.148 0.813,0.141 C0.855,0.134 0.906,0.124 0.938,0.109 C0.970,0.094 0.981,0.077 0.992,0.055 C1.003,0.033 1.004,0.008 1.000,-0.016 C0.996,-0.040 0.986,-0.058 0.969,-0.078 C0.952,-0.098 0.931,-0.112 0.906,-0.125 C0.881,-0.138 0.856,-0.142 0.828,-0.148 C0.800,-0.154 0.775,-0.145 0.750,-0.156 C0.725,-0.167 0.711,-0.190 0.687,-0.211 C0.663,-0.232 0.631,-0.272 0.617,-0.273 C0.603,-0.274 0.612,-0.239 0.609,-0.219 C0.606,-0.199 0.615,-0.179 0.602,-0.164 C0.589,-0.149 0.569,-0.146 0.539,-0.133 C0.509,-0.120 0.476,-0.109 0.438,-0.094 C0.400,-0.079 0.365,-0.058 0.328,-0.047 C0.291,-0.036 0.271,-0.034 0.234,-0.031 C0.197,-0.028 0.162,-0.034 0.125,-0.031 C0.088,-0.028 0.053,-0.022 0.031,-0.016 C0.009,-0.010 -0.008,-0.013 0.000,0.000Z" fill="#f7981d" stroke="#fff" stroke-opacity="0.55" stroke-width="0.0254" stroke-linejoin="round" paint-order="stroke"/></g>
<g transform="translate(381.5,363.9) rotate(-70.31) scale(78.06)"><path d="M0.000,0.000 C0.008,0.013 0.056,0.041 0.078,0.055 C0.101,0.069 0.103,0.079 0.125,0.078 C0.147,0.077 0.172,0.055 0.203,0.047 C0.234,0.039 0.263,0.028 0.297,0.031 C0.331,0.034 0.360,0.049 0.391,0.063 C0.422,0.077 0.439,0.092 0.469,0.109 C0.499,0.126 0.530,0.139 0.555,0.156 C0.580,0.173 0.594,0.200 0.609,0.203 C0.624,0.206 0.624,0.182 0.641,0.172 C0.658,0.162 0.672,0.154 0.703,0.148 C0.734,0.142 0.771,0.148 0.813,0.141 C0.855,0.134 0.906,0.124 0.938,0.109 C0.970,0.094 0.981,0.077 0.992,0.055 C1.003,0.033 1.004,0.008 1.000,-0.016 C0.996,-0.040 0.986,-0.058 0.969,-0.078 C0.952,-0.098 0.931,-0.112 0.906,-0.125 C0.881,-0.138 0.856,-0.142 0.828,-0.148 C0.800,-0.154 0.775,-0.145 0.750,-0.156 C0.725,-0.167 0.711,-0.190 0.687,-0.211 C0.663,-0.232 0.631,-0.272 0.617,-0.273 C0.603,-0.274 0.612,-0.239 0.609,-0.219 C0.606,-0.199 0.615,-0.179 0.602,-0.164 C0.589,-0.149 0.569,-0.146 0.539,-0.133 C0.509,-0.120 0.476,-0.109 0.438,-0.094 C0.400,-0.079 0.365,-0.058 0.328,-0.047 C0.291,-0.036 0.271,-0.034 0.234,-0.031 C0.197,-0.028 0.162,-0.034 0.125,-0.031 C0.088,-0.028 0.053,-0.022 0.031,-0.016 C0.009,-0.010 -0.008,-0.013 0.000,0.000Z" fill="#f7981d" stroke="#fff" stroke-opacity="0.55" stroke-width="0.0282" stroke-linejoin="round" paint-order="stroke"/></g>
<g transform="translate(554.4,378.4) rotate(-68.93) scale(78.44)"><path d="M0.000,0.000 C0.008,0.013 0.056,0.041 0.078,0.055 C0.101,0.069 0.103,0.079 0.125,0.078 C0.147,0.077 0.172,0.055 0.203,0.047 C0.234,0.039 0.263,0.028 0.297,0.031 C0.331,0.034 0.360,0.049 0.391,0.063 C0.422,0.077 0.439,0.092 0.469,0.109 C0.499,0.126 0.530,0.139 0.555,0.156 C0.580,0.173 0.594,0.200 0.609,0.203 C0.624,0.206 0.624,0.182 0.641,0.172 C0.658,0.162 0.672,0.154 0.703,0.148 C0.734,0.142 0.771,0.148 0.813,0.141 C0.855,0.134 0.906,0.124 0.938,0.109 C0.970,0.094 0.981,0.077 0.992,0.055 C1.003,0.033 1.004,0.008 1.000,-0.016 C0.996,-0.040 0.986,-0.058 0.969,-0.078 C0.952,-0.098 0.931,-0.112 0.906,-0.125 C0.881,-0.138 0.856,-0.142 0.828,-0.148 C0.800,-0.154 0.775,-0.145 0.750,-0.156 C0.725,-0.167 0.711,-0.190 0.687,-0.211 C0.663,-0.232 0.631,-0.272 0.617,-0.273 C0.603,-0.274 0.612,-0.239 0.609,-0.219 C0.606,-0.199 0.615,-0.179 0.602,-0.164 C0.589,-0.149 0.569,-0.146 0.539,-0.133 C0.509,-0.120 0.476,-0.109 0.438,-0.094 C0.400,-0.079 0.365,-0.058 0.328,-0.047 C0.291,-0.036 0.271,-0.034 0.234,-0.031 C0.197,-0.028 0.162,-0.034 0.125,-0.031 C0.088,-0.028 0.053,-0.022 0.031,-0.016 C0.009,-0.010 -0.008,-0.013 0.000,0.000Z" fill="#f7981d" stroke="#fff" stroke-opacity="0.55" stroke-width="0.0280" stroke-linejoin="round" paint-order="stroke"/></g>
<g transform="translate(400.4,380.3) rotate(-45.85) scale(66.62)"><path d="M0.000,0.000 C-0.015,0.011 0.055,0.046 0.078,0.054 C0.101,0.062 0.101,0.054 0.126,0.047 C0.151,0.040 0.186,0.022 0.219,0.015 C0.252,0.008 0.273,0.006 0.310,0.010 C0.347,0.014 0.379,0.018 0.426,0.037 C0.473,0.056 0.537,0.092 0.570,0.116 C0.603,0.140 0.589,0.166 0.611,0.170 C0.633,0.174 0.659,0.148 0.690,0.136 C0.721,0.124 0.748,0.114 0.783,0.104 C0.818,0.094 0.853,0.091 0.886,0.079 C0.919,0.067 0.947,0.056 0.969,0.040 C0.991,0.024 1.002,0.014 1.007,-0.011 C1.011,-0.036 1.011,-0.072 0.994,-0.099 C0.977,-0.126 0.950,-0.143 0.914,-0.162 C0.878,-0.181 0.837,-0.191 0.793,-0.206 C0.749,-0.221 0.703,-0.224 0.669,-0.244 C0.635,-0.264 0.616,-0.325 0.604,-0.319 C0.592,-0.313 0.611,-0.235 0.604,-0.209 C0.597,-0.183 0.593,-0.194 0.567,-0.173 C0.541,-0.152 0.503,-0.115 0.459,-0.091 C0.415,-0.067 0.379,-0.054 0.325,-0.039 C0.271,-0.024 0.217,-0.014 0.159,-0.007 C0.101,0.000 0.015,-0.011 0.000,0.000Z" fill="#ed1c24" stroke="#fff" stroke-opacity="0.55" stroke-width="0.0330" stroke-linejoin="round" paint-order="stroke"/></g>
<g transform="translate(444.8,376.2) rotate(-34.93) scale(66.72)"><path d="M0.000,0.000 C-0.015,0.011 0.055,0.046 0.078,0.054 C0.101,0.062 0.101,0.054 0.126,0.047 C0.151,0.040 0.186,0.022 0.219,0.015 C0.252,0.008 0.273,0.006 0.310,0.010 C0.347,0.014 0.379,0.018 0.426,0.037 C0.473,0.056 0.537,0.092 0.570,0.116 C0.603,0.140 0.589,0.166 0.611,0.170 C0.633,0.174 0.659,0.148 0.690,0.136 C0.721,0.124 0.748,0.114 0.783,0.104 C0.818,0.094 0.853,0.091 0.886,0.079 C0.919,0.067 0.947,0.056 0.969,0.040 C0.991,0.024 1.002,0.014 1.007,-0.011 C1.011,-0.036 1.011,-0.072 0.994,-0.099 C0.977,-0.126 0.950,-0.143 0.914,-0.162 C0.878,-0.181 0.837,-0.191 0.793,-0.206 C0.749,-0.221 0.703,-0.224 0.669,-0.244 C0.635,-0.264 0.616,-0.325 0.604,-0.319 C0.592,-0.313 0.611,-0.235 0.604,-0.209 C0.597,-0.183 0.593,-0.194 0.567,-0.173 C0.541,-0.152 0.503,-0.115 0.459,-0.091 C0.415,-0.067 0.379,-0.054 0.325,-0.039 C0.271,-0.024 0.217,-0.014 0.159,-0.007 C0.101,0.000 0.015,-0.011 0.000,0.000Z" fill="#ed1c24" stroke="#fff" stroke-opacity="0.55" stroke-width="0.0330" stroke-linejoin="round" paint-order="stroke"/></g>
<g transform="translate(454.5,387.2) rotate(-6.79) scale(87.92)"><path d="M0.000,0.000 C0.005,0.007 0.028,0.015 0.047,0.029 C0.066,0.043 0.081,0.075 0.106,0.078 C0.131,0.081 0.156,0.053 0.186,0.043 C0.216,0.033 0.242,0.025 0.270,0.022 C0.298,0.019 0.314,0.019 0.341,0.025 C0.368,0.031 0.392,0.044 0.422,0.058 C0.452,0.072 0.486,0.087 0.510,0.100 C0.534,0.113 0.544,0.118 0.557,0.129 C0.571,0.140 0.576,0.150 0.585,0.162 C0.594,0.174 0.594,0.198 0.608,0.198 C0.622,0.198 0.643,0.175 0.665,0.163 C0.688,0.151 0.705,0.144 0.733,0.134 C0.761,0.124 0.788,0.118 0.819,0.109 C0.850,0.100 0.879,0.095 0.905,0.085 C0.931,0.075 0.948,0.069 0.965,0.054 C0.982,0.039 0.994,0.021 1.000,0.000 C1.006,-0.021 1.007,-0.042 1.001,-0.062 C0.995,-0.082 0.985,-0.094 0.968,-0.110 C0.951,-0.126 0.929,-0.140 0.906,-0.151 C0.883,-0.162 0.863,-0.164 0.839,-0.170 C0.815,-0.176 0.795,-0.175 0.771,-0.182 C0.747,-0.189 0.728,-0.196 0.706,-0.210 C0.684,-0.224 0.666,-0.243 0.647,-0.259 C0.628,-0.275 0.606,-0.300 0.598,-0.297 C0.590,-0.294 0.602,-0.262 0.603,-0.243 C0.604,-0.224 0.616,-0.204 0.604,-0.189 C0.592,-0.174 0.562,-0.172 0.535,-0.161 C0.508,-0.150 0.485,-0.140 0.456,-0.126 C0.427,-0.112 0.407,-0.096 0.375,-0.082 C0.343,-0.069 0.312,-0.061 0.278,-0.051 C0.244,-0.041 0.217,-0.036 0.184,-0.029 C0.151,-0.022 0.122,-0.018 0.092,-0.014 C0.062,-0.010 0.037,-0.012 0.020,-0.009 C0.003,-0.006 -0.005,-0.007 0.000,0.000Z" fill="#3a52a3" stroke="#fff" stroke-opacity="0.55" stroke-width="0.0250" stroke-linejoin="round" paint-order="stroke"/></g>
<g transform="translate(312.9,440.8) rotate(-88.31) scale(77.83)"><path d="M0.000,0.000 C0.008,0.013 0.056,0.041 0.078,0.055 C0.101,0.069 0.103,0.079 0.125,0.078 C0.147,0.077 0.172,0.055 0.203,0.047 C0.234,0.039 0.263,0.028 0.297,0.031 C0.331,0.034 0.360,0.049 0.391,0.063 C0.422,0.077 0.439,0.092 0.469,0.109 C0.499,0.126 0.530,0.139 0.555,0.156 C0.580,0.173 0.594,0.200 0.609,0.203 C0.624,0.206 0.624,0.182 0.641,0.172 C0.658,0.162 0.672,0.154 0.703,0.148 C0.734,0.142 0.771,0.148 0.813,0.141 C0.855,0.134 0.906,0.124 0.938,0.109 C0.970,0.094 0.981,0.077 0.992,0.055 C1.003,0.033 1.004,0.008 1.000,-0.016 C0.996,-0.040 0.986,-0.058 0.969,-0.078 C0.952,-0.098 0.931,-0.112 0.906,-0.125 C0.881,-0.138 0.856,-0.142 0.828,-0.148 C0.800,-0.154 0.775,-0.145 0.750,-0.156 C0.725,-0.167 0.711,-0.190 0.687,-0.211 C0.663,-0.232 0.631,-0.272 0.617,-0.273 C0.603,-0.274 0.612,-0.239 0.609,-0.219 C0.606,-0.199 0.615,-0.179 0.602,-0.164 C0.589,-0.149 0.569,-0.146 0.539,-0.133 C0.509,-0.120 0.476,-0.109 0.438,-0.094 C0.400,-0.079 0.365,-0.058 0.328,-0.047 C0.291,-0.036 0.271,-0.034 0.234,-0.031 C0.197,-0.028 0.162,-0.034 0.125,-0.031 C0.088,-0.028 0.053,-0.022 0.031,-0.016 C0.009,-0.010 -0.008,-0.013 0.000,0.000Z" fill="#f7981d" stroke="#fff" stroke-opacity="0.55" stroke-width="0.0283" stroke-linejoin="round" paint-order="stroke"/></g>
<g transform="translate(360.2,446.1) rotate(-90.00) scale(87.70)"><path d="M0.000,0.000 C0.005,0.007 0.028,0.015 0.047,0.029 C0.066,0.043 0.081,0.075 0.106,0.078 C0.131,0.081 0.156,0.053 0.186,0.043 C0.216,0.033 0.242,0.025 0.270,0.022 C0.298,0.019 0.314,0.019 0.341,0.025 C0.368,0.031 0.392,0.044 0.422,0.058 C0.452,0.072 0.486,0.087 0.510,0.100 C0.534,0.113 0.544,0.118 0.557,0.129 C0.571,0.140 0.576,0.150 0.585,0.162 C0.594,0.174 0.594,0.198 0.608,0.198 C0.622,0.198 0.643,0.175 0.665,0.163 C0.688,0.151 0.705,0.144 0.733,0.134 C0.761,0.124 0.788,0.118 0.819,0.109 C0.850,0.100 0.879,0.095 0.905,0.085 C0.931,0.075 0.948,0.069 0.965,0.054 C0.982,0.039 0.994,0.021 1.000,0.000 C1.006,-0.021 1.007,-0.042 1.001,-0.062 C0.995,-0.082 0.985,-0.094 0.968,-0.110 C0.951,-0.126 0.929,-0.140 0.906,-0.151 C0.883,-0.162 0.863,-0.164 0.839,-0.170 C0.815,-0.176 0.795,-0.175 0.771,-0.182 C0.747,-0.189 0.728,-0.196 0.706,-0.210 C0.684,-0.224 0.666,-0.243 0.647,-0.259 C0.628,-0.275 0.606,-0.300 0.598,-0.297 C0.590,-0.294 0.602,-0.262 0.603,-0.243 C0.604,-0.224 0.616,-0.204 0.604,-0.189 C0.592,-0.174 0.562,-0.172 0.535,-0.161 C0.508,-0.150 0.485,-0.140 0.456,-0.126 C0.427,-0.112 0.407,-0.096 0.375,-0.082 C0.343,-0.069 0.312,-0.061 0.278,-0.051 C0.244,-0.041 0.217,-0.036 0.184,-0.029 C0.151,-0.022 0.122,-0.018 0.092,-0.014 C0.062,-0.010 0.037,-0.012 0.020,-0.009 C0.003,-0.006 -0.005,-0.007 0.000,0.000Z" fill="#3a52a3" stroke="#fff" stroke-opacity="0.55" stroke-width="0.0251" stroke-linejoin="round" paint-order="stroke"/></g>
<g transform="translate(380.8,445.4) rotate(-42.53) scale(86.98)"><path d="M0.000,0.000 C0.005,0.007 0.028,0.015 0.047,0.029 C0.066,0.043 0.081,0.075 0.106,0.078 C0.131,0.081 0.156,0.053 0.186,0.043 C0.216,0.033 0.242,0.025 0.270,0.022 C0.298,0.019 0.314,0.019 0.341,0.025 C0.368,0.031 0.392,0.044 0.422,0.058 C0.452,0.072 0.486,0.087 0.510,0.100 C0.534,0.113 0.544,0.118 0.557,0.129 C0.571,0.140 0.576,0.150 0.585,0.162 C0.594,0.174 0.594,0.198 0.608,0.198 C0.622,0.198 0.643,0.175 0.665,0.163 C0.688,0.151 0.705,0.144 0.733,0.134 C0.761,0.124 0.788,0.118 0.819,0.109 C0.850,0.100 0.879,0.095 0.905,0.085 C0.931,0.075 0.948,0.069 0.965,0.054 C0.982,0.039 0.994,0.021 1.000,0.000 C1.006,-0.021 1.007,-0.042 1.001,-0.062 C0.995,-0.082 0.985,-0.094 0.968,-0.110 C0.951,-0.126 0.929,-0.140 0.906,-0.151 C0.883,-0.162 0.863,-0.164 0.839,-0.170 C0.815,-0.176 0.795,-0.175 0.771,-0.182 C0.747,-0.189 0.728,-0.196 0.706,-0.210 C0.684,-0.224 0.666,-0.243 0.647,-0.259 C0.628,-0.275 0.606,-0.300 0.598,-0.297 C0.590,-0.294 0.602,-0.262 0.603,-0.243 C0.604,-0.224 0.616,-0.204 0.604,-0.189 C0.592,-0.174 0.562,-0.172 0.535,-0.161 C0.508,-0.150 0.485,-0.140 0.456,-0.126 C0.427,-0.112 0.407,-0.096 0.375,-0.082 C0.343,-0.069 0.312,-0.061 0.278,-0.051 C0.244,-0.041 0.217,-0.036 0.184,-0.029 C0.151,-0.022 0.122,-0.018 0.092,-0.014 C0.062,-0.010 0.037,-0.012 0.020,-0.009 C0.003,-0.006 -0.005,-0.007 0.000,0.000Z" fill="#3a52a3" stroke="#fff" stroke-opacity="0.55" stroke-width="0.0253" stroke-linejoin="round" paint-order="stroke"/></g>
<g transform="translate(333.7,517.4) rotate(-94.58) scale(78.95)"><path d="M0.000,0.000 C0.008,0.013 0.056,0.041 0.078,0.055 C0.101,0.069 0.103,0.079 0.125,0.078 C0.147,0.077 0.172,0.055 0.203,0.047 C0.234,0.039 0.263,0.028 0.297,0.031 C0.331,0.034 0.360,0.049 0.391,0.063 C0.422,0.077 0.439,0.092 0.469,0.109 C0.499,0.126 0.530,0.139 0.555,0.156 C0.580,0.173 0.594,0.200 0.609,0.203 C0.624,0.206 0.624,0.182 0.641,0.172 C0.658,0.162 0.672,0.154 0.703,0.148 C0.734,0.142 0.771,0.148 0.813,0.141 C0.855,0.134 0.906,0.124 0.938,0.109 C0.970,0.094 0.981,0.077 0.992,0.055 C1.003,0.033 1.004,0.008 1.000,-0.016 C0.996,-0.040 0.986,-0.058 0.969,-0.078 C0.952,-0.098 0.931,-0.112 0.906,-0.125 C0.881,-0.138 0.856,-0.142 0.828,-0.148 C0.800,-0.154 0.775,-0.145 0.750,-0.156 C0.725,-0.167 0.711,-0.190 0.687,-0.211 C0.663,-0.232 0.631,-0.272 0.617,-0.273 C0.603,-0.274 0.612,-0.239 0.609,-0.219 C0.606,-0.199 0.615,-0.179 0.602,-0.164 C0.589,-0.149 0.569,-0.146 0.539,-0.133 C0.509,-0.120 0.476,-0.109 0.438,-0.094 C0.400,-0.079 0.365,-0.058 0.328,-0.047 C0.291,-0.036 0.271,-0.034 0.234,-0.031 C0.197,-0.028 0.162,-0.034 0.125,-0.031 C0.088,-0.028 0.053,-0.022 0.031,-0.016 C0.009,-0.010 -0.008,-0.013 0.000,0.000Z" fill="#f7981d" stroke="#fff" stroke-opacity="0.55" stroke-width="0.0279" stroke-linejoin="round" paint-order="stroke"/></g>
<g transform="translate(383.6,534.8) rotate(-89.05) scale(78.61)"><path d="M0.000,0.000 C0.008,0.013 0.056,0.041 0.078,0.055 C0.101,0.069 0.103,0.079 0.125,0.078 C0.147,0.077 0.172,0.055 0.203,0.047 C0.234,0.039 0.263,0.028 0.297,0.031 C0.331,0.034 0.360,0.049 0.391,0.063 C0.422,0.077 0.439,0.092 0.469,0.109 C0.499,0.126 0.530,0.139 0.555,0.156 C0.580,0.173 0.594,0.200 0.609,0.203 C0.624,0.206 0.624,0.182 0.641,0.172 C0.658,0.162 0.672,0.154 0.703,0.148 C0.734,0.142 0.771,0.148 0.813,0.141 C0.855,0.134 0.906,0.124 0.938,0.109 C0.970,0.094 0.981,0.077 0.992,0.055 C1.003,0.033 1.004,0.008 1.000,-0.016 C0.996,-0.040 0.986,-0.058 0.969,-0.078 C0.952,-0.098 0.931,-0.112 0.906,-0.125 C0.881,-0.138 0.856,-0.142 0.828,-0.148 C0.800,-0.154 0.775,-0.145 0.750,-0.156 C0.725,-0.167 0.711,-0.190 0.687,-0.211 C0.663,-0.232 0.631,-0.272 0.617,-0.273 C0.603,-0.274 0.612,-0.239 0.609,-0.219 C0.606,-0.199 0.615,-0.179 0.602,-0.164 C0.589,-0.149 0.569,-0.146 0.539,-0.133 C0.509,-0.120 0.476,-0.109 0.438,-0.094 C0.400,-0.079 0.365,-0.058 0.328,-0.047 C0.291,-0.036 0.271,-0.034 0.234,-0.031 C0.197,-0.028 0.162,-0.034 0.125,-0.031 C0.088,-0.028 0.053,-0.022 0.031,-0.016 C0.009,-0.010 -0.008,-0.013 0.000,0.000Z" fill="#f7981d" stroke="#fff" stroke-opacity="0.55" stroke-width="0.0280" stroke-linejoin="round" paint-order="stroke"/></g>
<g transform="translate(387.4,564.8) rotate(-126.45) scale(65.14)"><path d="M0.000,0.000 C-0.015,0.011 0.055,0.046 0.078,0.054 C0.101,0.062 0.101,0.054 0.126,0.047 C0.151,0.040 0.186,0.022 0.219,0.015 C0.252,0.008 0.273,0.006 0.310,0.010 C0.347,0.014 0.379,0.018 0.426,0.037 C0.473,0.056 0.537,0.092 0.570,0.116 C0.603,0.140 0.589,0.166 0.611,0.170 C0.633,0.174 0.659,0.148 0.690,0.136 C0.721,0.124 0.748,0.114 0.783,0.104 C0.818,0.094 0.853,0.091 0.886,0.079 C0.919,0.067 0.947,0.056 0.969,0.040 C0.991,0.024 1.002,0.014 1.007,-0.011 C1.011,-0.036 1.011,-0.072 0.994,-0.099 C0.977,-0.126 0.950,-0.143 0.914,-0.162 C0.878,-0.181 0.837,-0.191 0.793,-0.206 C0.749,-0.221 0.703,-0.224 0.669,-0.244 C0.635,-0.264 0.616,-0.325 0.604,-0.319 C0.592,-0.313 0.611,-0.235 0.604,-0.209 C0.597,-0.183 0.593,-0.194 0.567,-0.173 C0.541,-0.152 0.503,-0.115 0.459,-0.091 C0.415,-0.067 0.379,-0.054 0.325,-0.039 C0.271,-0.024 0.217,-0.014 0.159,-0.007 C0.101,0.000 0.015,-0.011 0.000,0.000Z" fill="#ed1c24" stroke="#fff" stroke-opacity="0.55" stroke-width="0.0338" stroke-linejoin="round" paint-order="stroke"/></g>
<g transform="translate(426.0,597.2) rotate(-118.53) scale(65.33)"><path d="M0.000,0.000 C-0.015,0.011 0.055,0.046 0.078,0.054 C0.101,0.062 0.101,0.054 0.126,0.047 C0.151,0.040 0.186,0.022 0.219,0.015 C0.252,0.008 0.273,0.006 0.310,0.010 C0.347,0.014 0.379,0.018 0.426,0.037 C0.473,0.056 0.537,0.092 0.570,0.116 C0.603,0.140 0.589,0.166 0.611,0.170 C0.633,0.174 0.659,0.148 0.690,0.136 C0.721,0.124 0.748,0.114 0.783,0.104 C0.818,0.094 0.853,0.091 0.886,0.079 C0.919,0.067 0.947,0.056 0.969,0.040 C0.991,0.024 1.002,0.014 1.007,-0.011 C1.011,-0.036 1.011,-0.072 0.994,-0.099 C0.977,-0.126 0.950,-0.143 0.914,-0.162 C0.878,-0.181 0.837,-0.191 0.793,-0.206 C0.749,-0.221 0.703,-0.224 0.669,-0.244 C0.635,-0.264 0.616,-0.325 0.604,-0.319 C0.592,-0.313 0.611,-0.235 0.604,-0.209 C0.597,-0.183 0.593,-0.194 0.567,-0.173 C0.541,-0.152 0.503,-0.115 0.459,-0.091 C0.415,-0.067 0.379,-0.054 0.325,-0.039 C0.271,-0.024 0.217,-0.014 0.159,-0.007 C0.101,0.000 0.015,-0.011 0.000,0.000Z" fill="#ed1c24" stroke="#fff" stroke-opacity="0.55" stroke-width="0.0337" stroke-linejoin="round" paint-order="stroke"/></g>
</svg>
<svg class="a" style="left:0;top:0" width="1280" height="721"><path d="M6,59 L10,62.5 L6,66 Z M10.5,59 L14.5,62.5 L10.5,66 Z" fill="#c8c8c8"/>
<rect x="10" y="73" width="1" height="3" fill="#2a2a2a"/>
<rect x="12" y="73" width="1" height="3" fill="#2a2a2a"/>
<rect x="14" y="73" width="1" height="3" fill="#2a2a2a"/>
<rect x="16" y="73" width="1" height="3" fill="#2a2a2a"/>
<rect x="18" y="73" width="1" height="3" fill="#2a2a2a"/>
<rect x="20" y="73" width="1" height="3" fill="#2a2a2a"/>
<rect x="22" y="73" width="1" height="3" fill="#2a2a2a"/>
<rect x="24" y="73" width="1" height="3" fill="#2a2a2a"/>
<rect x="26" y="73" width="1" height="3" fill="#2a2a2a"/>
<rect x="28" y="73" width="1" height="3" fill="#2a2a2a"/>
<rect x="5" y="30" width="3" height="1" fill="#333"/>
<rect x="5" y="32" width="3" height="1" fill="#333"/>
<rect x="5" y="34" width="3" height="1" fill="#333"/>
<rect x="5" y="36" width="3" height="1" fill="#333"/>
<rect x="5" y="38" width="3" height="1" fill="#333"/>
<rect x="5" y="40" width="3" height="1" fill="#333"/>
<rect x="5" y="42" width="3" height="1" fill="#333"/>
<rect x="5" y="44" width="3" height="1" fill="#333"/>
<rect x="5" y="46" width="3" height="1" fill="#333"/>
<rect x="5" y="48" width="3" height="1" fill="#333"/>
<path d="M23,31 L23,41 L26,38 L30,38 Z" fill="#b8b8b8"/>
<path d="M29,40 H37 M33,36 V44" stroke="#b8b8b8" stroke-width="1.2"/>
<path d="M28,40 l2,-1.8 v3.6Z M38,40 l-2,-1.8 v3.6Z M33,35 l-1.8,2 h3.6Z M33,45 l-1.8,-2 h3.6Z" fill="#b8b8b8"/>
<path d="M49,38 L55,38 L52,41 Z" fill="#d8d8d8"/>
<path d="M188.5,39 L193.5,39 L191,36 Z M188.5,41 L193.5,41 L191,44 Z" fill="#e0e0e0"/>
<path d="M1263.0,39 L1268.0,39 L1265.5,36 Z M1263.0,41 L1268.0,41 L1265.5,44 Z" fill="#e0e0e0"/>
<line x1="354" y1="31.5" x2="368" y2="31.5" stroke="#9c9c9c" stroke-width="1"/>
<rect x="355.5" y="34.5" width="3" height="10" fill="none" stroke="#9c9c9c" stroke-width="1"/>
<rect x="362" y="34" width="4" height="6" fill="#8a8a8a" stroke="none" stroke-width="1"/>
<line x1="377" y1="38.5" x2="392" y2="38.5" stroke="#9c9c9c" stroke-width="1"/>
<rect x="379.5" y="33.5" width="3" height="10" fill="#535353" stroke="#9c9c9c" stroke-width="1"/>
<rect x="386" y="35" width="4" height="6" fill="#8a8a8a" stroke="none" stroke-width="1"/>
<line x1="402" y1="45.5" x2="416" y2="45.5" stroke="#9c9c9c" stroke-width="1"/>
<rect x="403.5" y="32.5" width="3" height="10" fill="none" stroke="#9c9c9c" stroke-width="1"/>
<rect x="410" y="38" width="4" height="6" fill="#8a8a8a" stroke="none" stroke-width="1"/>
<line x1="430.5" y1="31" x2="430.5" y2="46" stroke="#9c9c9c" stroke-width="1"/>
<rect x="432.5" y="33" width="7" height="4" fill="#8a8a8a" stroke="none" stroke-width="1"/>
<rect x="433.5" y="40.5" width="10" height="3" fill="none" stroke="#9c9c9c" stroke-width="1"/>
<line x1="460.5" y1="31" x2="460.5" y2="46" stroke="#9c9c9c" stroke-width="1"/>
<rect x="457" y="33" width="7" height="4" fill="#8a8a8a" stroke="none" stroke-width="1"/>
<rect x="455.5" y="40.5" width="10" height="3" fill="#535353" stroke="#9c9c9c" stroke-width="1"/>
<line x1="490.5" y1="31" x2="490.5" y2="46" stroke="#9c9c9c" stroke-width="1"/>
<rect x="482" y="33" width="7" height="4" fill="#8a8a8a" stroke="none" stroke-width="1"/>
<rect x="478.5" y="40.5" width="10" height="3" fill="none" stroke="#9c9c9c" stroke-width="1"/>
<line x1="511" y1="33.5" x2="525" y2="33.5" stroke="#9c9c9c" stroke-width="1"/>
<line x1="511" y1="40.5" x2="525" y2="40.5" stroke="#9c9c9c" stroke-width="1"/>
<rect x="515" y="33" width="7" height="3.5" fill="#8a8a8a" stroke="none" stroke-width="1"/>
<rect x="513.5" y="41.5" width="9" height="3" fill="none" stroke="#9c9c9c" stroke-width="1"/>
<line x1="535" y1="36.5" x2="549" y2="36.5" stroke="#9c9c9c" stroke-width="1"/>
<line x1="535" y1="43.5" x2="549" y2="43.5" stroke="#9c9c9c" stroke-width="1"/>
<rect x="539" y="33" width="7" height="3.5" fill="#8a8a8a" stroke="none" stroke-width="1"/>
<rect x="537.5" y="41.5" width="9" height="3" fill="none" stroke="#9c9c9c" stroke-width="1"/>
<line x1="559" y1="39.5" x2="573" y2="39.5" stroke="#9c9c9c" stroke-width="1"/>
<line x1="559" y1="46.5" x2="573" y2="46.5" stroke="#9c9c9c" stroke-width="1"/>
<rect x="563" y="33" width="7" height="3.5" fill="#8a8a8a" stroke="none" stroke-width="1"/>
<rect x="561.5" y="41.5" width="9" height="3" fill="none" stroke="#9c9c9c" stroke-width="1"/>
<line x1="590.5" y1="31" x2="590.5" y2="46" stroke="#9c9c9c" stroke-width="1"/>
<line x1="596.5" y1="31" x2="596.5" y2="46" stroke="#9c9c9c" stroke-width="1"/>
<rect x="589.5" y="33.5" width="3" height="9" fill="none" stroke="#9c9c9c" stroke-width="1"/>
<rect x="595" y="35" width="3.5" height="6" fill="#8a8a8a" stroke="none" stroke-width="1"/>
<line x1="615.5" y1="31" x2="615.5" y2="46" stroke="#9c9c9c" stroke-width="1"/>
<line x1="621.5" y1="31" x2="621.5" y2="46" stroke="#9c9c9c" stroke-width="1"/>
<rect x="613.5" y="33.5" width="3" height="9" fill="none" stroke="#9c9c9c" stroke-width="1"/>
<rect x="619" y="35" width="3.5" height="6" fill="#8a8a8a" stroke="none" stroke-width="1"/>
<line x1="639.5" y1="31" x2="639.5" y2="46" stroke="#9c9c9c" stroke-width="1"/>
<line x1="645.5" y1="31" x2="645.5" y2="46" stroke="#9c9c9c" stroke-width="1"/>
<rect x="637.5" y="33.5" width="3" height="9" fill="none" stroke="#9c9c9c" stroke-width="1"/>
<rect x="643" y="35" width="3.5" height="6" fill="#8a8a8a" stroke="none" stroke-width="1"/>
<rect x="667.5" y="33.5" width="4" height="3" fill="#8a8a8a" stroke="none" stroke-width="1"/>
<rect x="667.5" y="37.5" width="4" height="8" fill="none" stroke="#9c9c9c" stroke-width="1"/>
<rect x="676.5" y="33.5" width="4" height="3" fill="#8a8a8a" stroke="none" stroke-width="1"/>
<rect x="676.5" y="37.5" width="4" height="8" fill="none" stroke="#9c9c9c" stroke-width="1"/>
<line x1="674" y1="32" x2="674" y2="46" stroke="#9c9c9c" stroke-width="1"/>
<circle cx="761" cy="37" r="3.2" fill="#8e8e8e"/><path d="M753,39 q-2,4 4,5 l8,0 q3,0 2,-3" fill="none" stroke="#8e8e8e" stroke-width="1.3"/><path d="M754,38 q3,-3 7,-3" fill="none" stroke="#8e8e8e" stroke-width="1.3"/>
<path d="M778.5,34 A6.5,6.5 0 1 0 783,32.5" fill="none" stroke="#8e8e8e" stroke-width="1.2"/><path d="M776,32 l4,0.5 l-2,3Z" fill="#8e8e8e"/><circle cx="783" cy="39" r="3.6" fill="none" stroke="#8e8e8e" stroke-width="1"/><circle cx="783" cy="39" r="2.2" fill="#8e8e8e"/>
<path d="M808.1,37.9 L808.1,33.5 L809.8,33.5 L807.0,30.5 L804.2,33.5 L805.9,33.5 L805.9,37.9 L805.9,37.9 L801.5,37.9 L801.5,36.2 L798.5,39.0 L801.5,41.8 L801.5,40.1 L805.9,40.1 L805.9,40.1 L805.9,44.5 L804.2,44.5 L807.0,47.5 L809.8,44.5 L808.1,44.5 L808.1,40.1 L808.1,40.1 L812.5,40.1 L812.5,41.8 L815.5,39.0 L812.5,36.2 L812.5,37.9 L808.1,37.9Z" fill="none" stroke="#8e8e8e" stroke-width="1.1" stroke-linejoin="round"/>
<circle cx="831" cy="39" r="3.5" fill="#8e8e8e"/><path d="M831,31 l-3,3 h6Z M831,47 l-3,-3 h6Z M823,39 l3,-3 v6Z M839,39 l-3,-3 v6Z" fill="#8e8e8e"/>
<rect x="848" y="35" width="8" height="7" fill="#8e8e8e"/><path d="M856,37 l4,-2 v7 l-4,-2Z" fill="#8e8e8e"/><path d="M865,34 l-4,5 l4,5" fill="none" stroke="#8e8e8e" stroke-width="1"/>
<path d="M49.2,63.7 L54.8,69.3 M54.8,63.7 L49.2,69.3" stroke="#cfcfcf" stroke-width="1.5"/>
<path d="M305.2,63.7 L310.8,69.3 M310.8,63.7 L305.2,69.3" stroke="#cfcfcf" stroke-width="1.5"/>
<path d="M518.2,63.7 L523.8,69.3 M523.8,63.7 L518.2,69.3" stroke="#cfcfcf" stroke-width="1.5"/>
<path d="M788.2,63.7 L793.8,69.3 M793.8,63.7 L788.2,69.3" stroke="#cfcfcf" stroke-width="1.5"/>
<path d="M11,92 L11,102 L14,99 L18,99 Z" fill="#b8b8b8"/>
<path d="M17,101 H25 M21,97 V105" stroke="#b8b8b8" stroke-width="1.2"/>
<path d="M16,101 l2,-1.8 v3.6Z M26,101 l-2,-1.8 v3.6Z M21,96 l-1.8,2 h3.6Z M21,106 l-1.8,-2 h3.6Z" fill="#b8b8b8"/>
<rect x="12.5" y="116" width="13" height="13" fill="none" stroke="#b4b4b4" stroke-width="1.2" stroke-dasharray="3,1.6"/>
<path d="M28,133 L32,133 L32,129 Z" fill="#d0d0d0"/>
<path d="M12,141 L20,145 L26,140 L23,152 L15,151 Z" fill="none" stroke="#b4b4b4" stroke-width="1.3"/><path d="M15,151 q-1,4 2,3" fill="none" stroke="#b4b4b4" stroke-width="1"/>
<path d="M28,159 L32,159 L32,155 Z" fill="#d0d0d0"/>
<path d="M19,174 L28,183" stroke="#b4b4b4" stroke-width="2"/><circle cx="15" cy="170" r="3.5" fill="#b4b4b4"/><path d="M15,164 v12 M9,170 h12 M11,166 l8,8 M19,166 l-8,8" stroke="#b4b4b4" stroke-width="1"/>
<path d="M28,185 L32,185 L32,181 Z" fill="#d0d0d0"/>
<path d="M13,195 L25,197 L24,207 L14,208 Z M17,195.5 L17.5,208 M21,196 L21,207.5 M13.5,199 L24.8,200 M13.8,203.5 L24.4,203.8" fill="none" stroke="#b4b4b4" stroke-width="1"/><circle cx="13" cy="195" r="1.2" fill="none" stroke="#b4b4b4"/><circle cx="25" cy="197" r="1.2" fill="none" stroke="#b4b4b4"/><circle cx="24" cy="207" r="1.2" fill="none" stroke="#b4b4b4"/><circle cx="14" cy="208" r="1.2" fill="none" stroke="#b4b4b4"/>
<path d="M28,211 L32,211 L32,207 Z" fill="#d0d0d0"/>
<path d="M24,218 l3,3 l-3,3 l-3,-3 Z" fill="#b4b4b4"/><path d="M21,222 L13,230 L12,234 L16,233 L24,225" fill="none" stroke="#b4b4b4" stroke-width="1.2"/>
<path d="M28,237 L32,237 L32,233 Z" fill="#d0d0d0"/>
<rect x="12.5" y="250" width="13" height="11" rx="3" fill="#7a7a7a" stroke="#b4b4b4" stroke-width="1.4"/><path d="M11,252.5 h3 M11,255.5 h3 M11,258.5 h3 M24,252.5 h3 M24,255.5 h3 M24,258.5 h3 M15.5,248 v3 M19,248 v3 M22.5,248 v3 M15.5,260 v3 M19,260 v3 M22.5,260 v3" stroke="#b4b4b4" stroke-width="1"/>
<path d="M28,268 L32,268 L32,264 Z" fill="#d0d0d0"/>
<path d="M27.5,273 L19,282" stroke="#b4b4b4" stroke-width="2.2" stroke-linecap="round"/><path d="M18.5,281 q-4,-1 -6,3 q-1,2 -3,3 q6,1 9,-1 q2,-2 0,-5Z" fill="#b4b4b4"/>
<path d="M28,293 L32,293 L32,289 Z" fill="#d0d0d0"/>
<circle cx="19" cy="301" r="3" fill="#b4b4b4"/><rect x="17.5" y="303" width="3" height="4" fill="#b4b4b4"/><rect x="12" y="307" width="14" height="3" fill="#b4b4b4"/><rect x="12" y="311" width="14" height="1.5" fill="#b4b4b4"/>
<path d="M28,319 L32,319 L32,315 Z" fill="#d0d0d0"/>
<path d="M26,327 L17,337" stroke="#b4b4b4" stroke-width="2"/><path d="M16,336 q-3,0 -4,3 q3,1 6,-1Z" fill="#b4b4b4"/><path d="M12,332 q2,-4 7,-4 M12,332 l0,-3 l3,2" fill="none" stroke="#b4b4b4" stroke-width="1.2"/>
<path d="M28,345 L32,345 L32,341 Z" fill="#d0d0d0"/>
<path d="M13,360 L21,353 L27,353 L27,357 L19,364 L13,364 Z" fill="#b4b4b4"/><path d="M13,360 L19,360 L27,353" stroke="#666" stroke-width="0.8" fill="none"/>
<path d="M28,371 L32,371 L32,367 Z" fill="#d0d0d0"/>
<g transform="rotate(-25 18 386)"><rect x="12" y="381" width="12" height="10" rx="1.5" fill="#b4b4b4"/><ellipse cx="18" cy="381" rx="6" ry="2" fill="#8a8a8a" stroke="#b4b4b4" stroke-width="0.8"/><path d="M13,381 q0,-7 5,-7 q5,0 5,7" fill="none" stroke="#b4b4b4" stroke-width="1.1"/></g><path d="M23,381 q4,2 3,9" stroke="#b4b4b4" stroke-width="1.6" fill="none"/><circle cx="26" cy="391" r="1.2" fill="#b4b4b4"/>
<path d="M28,397 L32,397 L32,393 Z" fill="#d0d0d0"/>
<path d="M19,403 q-6,8 -6,11 a6,6 0 0 0 12,0 q0,-3 -6,-11Z" fill="#b4b4b4"/>
<path d="M28,423 L32,423 L32,419 Z" fill="#d0d0d0"/>
<path d="M10,436 q0,-6 7,-6 q6,0 10,5 q2,3 0,6 q-2,2 -6,2 q-4,0 -6,-1 l-3,1 q-2,-2 -2,-7Z" fill="#b4b4b4"/><ellipse cx="16" cy="437" rx="3" ry="2" fill="#555"/>
<path d="M28,449 L32,449 L32,445 Z" fill="#d0d0d0"/>
<path d="M25,459 L27,461 L20,474 L12,475 L13,468 Z" fill="#b4b4b4"/><circle cx="18" cy="469" r="1.2" fill="#555"/>
<path d="M28,477 L32,477 L32,473 Z" fill="#d0d0d0"/>
<text x="19" y="498" text-anchor="middle" font-family="Liberation Serif" font-size="17" fill="#b4b4b4">T</text>
<path d="M28,503 L32,503 L32,499 Z" fill="#d0d0d0"/>
<path d="M14,511 L14,526 L18,522 L21,528 L23,527 L20,521 L25,521 Z" fill="#b4b4b4"/>
<path d="M28,530 L32,530 L32,526 Z" fill="#d0d0d0"/>
<rect x="12" y="539" width="14" height="11" fill="#7a7a7a" stroke="#b4b4b4" stroke-width="1.2"/>
<path d="M28,556 L32,556 L32,552 Z" fill="#d0d0d0"/>
<path d="M13,575 q-2,-3 0,-4 l2,2 v-7 q1,-2 2,0 v5 v-7 q1,-2 2,0 v7 v-6 q1,-2 2,0 v6 v-4 q1,-2 2,0 v7 q0,6 -6,7 q-3,0 -6,-6Z" fill="#b4b4b4"/>
<path d="M28,584 L32,584 L32,580 Z" fill="#d0d0d0"/>
<circle cx="17" cy="597" r="4.5" fill="#6a6a6a" stroke="#b4b4b4" stroke-width="1.6"/><path d="M20.5,600.5 L26,606" stroke="#b4b4b4" stroke-width="2.4"/>
<rect x="7.5" y="619.5" width="6.5" height="6.5" fill="#bdbdbd" stroke="#222" stroke-width="1"/><rect x="4.5" y="616.5" width="6" height="6" fill="#1a1a1a" stroke="#c8c8c8" stroke-width="1"/>
<path d="M23.5,617 q6,-1 6,5.5" fill="none" stroke="#c8c8c8" stroke-width="1.2"/><path d="M21.5,617 l3,-2.5 v5Z M29.5,625 l-2.5,-3 h5Z" fill="#c8c8c8"/>
<rect x="15.5" y="642.5" width="17" height="17" fill="#fde1e7" stroke="#1e1e1e" stroke-width="1"/>
<rect x="5" y="632" width="18" height="18" fill="#f99a00" stroke="#1e1e1e" stroke-width="1"/><rect x="6" y="633" width="16" height="16" fill="none" stroke="#f4f4f4" stroke-width="1"/>
<rect x="9.5" y="670.5" width="16" height="12" fill="#3a3a3a" stroke="#bdbdbd" stroke-width="1"/>
<circle cx="21.70" cy="676.50" r="0.6" fill="#eee"/>
<circle cx="20.90" cy="678.97" r="0.6" fill="#eee"/>
<circle cx="18.80" cy="680.49" r="0.6" fill="#eee"/>
<circle cx="16.20" cy="680.49" r="0.6" fill="#eee"/>
<circle cx="14.10" cy="678.97" r="0.6" fill="#eee"/>
<circle cx="13.30" cy="676.50" r="0.6" fill="#eee"/>
<circle cx="14.10" cy="674.03" r="0.6" fill="#eee"/>
<circle cx="16.20" cy="672.51" r="0.6" fill="#eee"/>
<circle cx="18.80" cy="672.51" r="0.6" fill="#eee"/>
<circle cx="20.90" cy="674.03" r="0.6" fill="#eee"/>
<rect x="15.5" y="696.5" width="12" height="9" fill="#6a6a6a" stroke="#c4c4c4" stroke-width="1"/><rect x="10.5" y="699.5" width="11" height="9" fill="#4a4a4a" stroke="#c4c4c4" stroke-width="1"/>
<path d="M28,712 L32,712 L32,708 Z" fill="#d0d0d0"/>
<circle cx="112" cy="712" r="5" fill="#777" stroke="#999" stroke-width="0.6"/><path d="M109,709 h4 l2,2 v3 h-6Z" fill="#ddd"/>
<path d="M298.5,707 L306,712 L298.5,717 Z" fill="#e0e0e0"/>
<path d="M1054,59 L1050.5,62.5 L1054,66 Z M1058,59 L1054.5,62.5 L1058,66 Z" fill="#c8c8c8"/>
<path d="M1267,59 L1271,62.5 L1267,66 Z M1271.5,59 L1275.5,62.5 L1271.5,66 Z" fill="#c8c8c8"/>
<rect x="1034" y="74" width="1" height="3" fill="#2a2a2a"/>
<rect x="1036" y="74" width="1" height="3" fill="#2a2a2a"/>
<rect x="1038" y="74" width="1" height="3" fill="#2a2a2a"/>
<rect x="1040" y="74" width="1" height="3" fill="#2a2a2a"/>
<rect x="1042" y="74" width="1" height="3" fill="#2a2a2a"/>
<rect x="1044" y="74" width="1" height="3" fill="#2a2a2a"/>
<rect x="1046" y="74" width="1" height="3" fill="#2a2a2a"/>
<rect x="1048" y="74" width="1" height="3" fill="#2a2a2a"/>
<rect x="1050" y="74" width="1" height="3" fill="#2a2a2a"/>
<rect x="1052" y="74" width="1" height="3" fill="#2a2a2a"/>
<rect x="1034" y="115" width="1" height="3" fill="#2a2a2a"/>
<rect x="1036" y="115" width="1" height="3" fill="#2a2a2a"/>
<rect x="1038" y="115" width="1" height="3" fill="#2a2a2a"/>
<rect x="1040" y="115" width="1" height="3" fill="#2a2a2a"/>
<rect x="1042" y="115" width="1" height="3" fill="#2a2a2a"/>
<rect x="1044" y="115" width="1" height="3" fill="#2a2a2a"/>
<rect x="1046" y="115" width="1" height="3" fill="#2a2a2a"/>
<rect x="1048" y="115" width="1" height="3" fill="#2a2a2a"/>
<rect x="1050" y="115" width="1" height="3" fill="#2a2a2a"/>
<rect x="1052" y="115" width="1" height="3" fill="#2a2a2a"/>
<rect x="1034" y="184" width="1" height="3" fill="#2a2a2a"/>
<rect x="1036" y="184" width="1" height="3" fill="#2a2a2a"/>
<rect x="1038" y="184" width="1" height="3" fill="#2a2a2a"/>
<rect x="1040" y="184" width="1" height="3" fill="#2a2a2a"/>
<rect x="1042" y="184" width="1" height="3" fill="#2a2a2a"/>
<rect x="1044" y="184" width="1" height="3" fill="#2a2a2a"/>
<rect x="1046" y="184" width="1" height="3" fill="#2a2a2a"/>
<rect x="1048" y="184" width="1" height="3" fill="#2a2a2a"/>
<rect x="1050" y="184" width="1" height="3" fill="#2a2a2a"/>
<rect x="1052" y="184" width="1" height="3" fill="#2a2a2a"/>
<rect x="1034" y="253" width="1" height="3" fill="#2a2a2a"/>
<rect x="1036" y="253" width="1" height="3" fill="#2a2a2a"/>
<rect x="1038" y="253" width="1" height="3" fill="#2a2a2a"/>
<rect x="1040" y="253" width="1" height="3" fill="#2a2a2a"/>
<rect x="1042" y="253" width="1" height="3" fill="#2a2a2a"/>
<rect x="1044" y="253" width="1" height="3" fill="#2a2a2a"/>
<rect x="1046" y="253" width="1" height="3" fill="#2a2a2a"/>
<rect x="1048" y="253" width="1" height="3" fill="#2a2a2a"/>
<rect x="1050" y="253" width="1" height="3" fill="#2a2a2a"/>
<rect x="1052" y="253" width="1" height="3" fill="#2a2a2a"/>
<rect x="1038.5" y="84.5" width="4" height="4" fill="none" stroke="#b8b8b8"/><rect x="1038.5" y="90.5" width="4" height="4" fill="none" stroke="#b8b8b8"/><rect x="1038" y="96" width="5" height="5" fill="#b8b8b8"/><path d="M1048,88 q5,0 5,5 q0,5 -5,8" fill="none" stroke="#b8b8b8" stroke-width="1.6"/><path d="M1045,88 l4,-4 v8Z" fill="#b8b8b8"/><rect x="1047" y="84" width="5" height="1.5" fill="#b8b8b8"/>
<rect x="1039" y="133" width="8" height="9" fill="#b8b8b8"/><path d="M1041,133 l-3,-7 M1043,133 v-9 M1045,133 l4,-6" stroke="#b8b8b8" stroke-width="1.3"/><ellipse cx="1038" cy="126" rx="2" ry="3" fill="#b8b8b8" transform="rotate(-30 1038 126)"/><ellipse cx="1043" cy="124" rx="1.6" ry="3" fill="#b8b8b8"/><ellipse cx="1049" cy="127" rx="2.5" ry="2" fill="#b8b8b8" transform="rotate(30 1049 127)"/>
<path d="M1043,156 h11 M1037,163 h10" stroke="#b8b8b8" stroke-width="1.8"/><path d="M1036,154 q3,-3 8,1 q-4,3 -8,1Z M1046,163 l8,-5 q2,5 0,10Z" fill="#b8b8b8"/>
<text x="1043" y="209" text-anchor="middle" font-family="Liberation Sans" font-size="15" fill="#b8b8b8">A</text><rect x="1050" y="195" width="1.2" height="15" fill="#b8b8b8"/>
<path d="M1042,223 h6 v14 h-1.5 v-12.5 h-1.2 v12.5 h-1.5 v-6 a4,4 0 0 1 -1.8,-8Z" fill="#b8b8b8"/>
<path d="M1043.5,263 l7,4 v8 l-7,4 l-7,-4 v-8Z" fill="#b8b8b8"/><path d="M1036.5,267 l7,4 l7,-4 M1043.5,271 v8" fill="none" stroke="#555" stroke-width="1"/>
<path d="M1261,76 h5 l-2.5,3Z" fill="#ddd"/>
<rect x="1267" y="74.0" width="8" height="1.2" fill="#ddd"/>
<rect x="1267" y="76.2" width="8" height="1.2" fill="#ddd"/>
<rect x="1267" y="78.4" width="8" height="1.2" fill="#ddd"/>
<rect x="1267" y="80.6" width="8" height="1.2" fill="#ddd"/>
<path d="M1261,197 h5 l-2.5,3Z" fill="#ddd"/>
<rect x="1267" y="195.0" width="8" height="1.2" fill="#ddd"/>
<rect x="1267" y="197.2" width="8" height="1.2" fill="#ddd"/>
<rect x="1267" y="199.4" width="8" height="1.2" fill="#ddd"/>
<rect x="1267" y="201.6" width="8" height="1.2" fill="#ddd"/>
<circle cx="1119" cy="116" r="4.2" fill="none" stroke="#bdbdbd" stroke-width="1.2"/><path d="M1119,111.8 a4.2,4.2 0 0 1 0,8.4Z" fill="#bdbdbd"/>
<line x1="1125.5" y1="116.0" x2="1127.5" y2="116.0" stroke="#bdbdbd" stroke-width="1.3"/>
<line x1="1123.6" y1="120.6" x2="1125.0" y2="122.0" stroke="#bdbdbd" stroke-width="1.3"/>
<line x1="1119.0" y1="122.5" x2="1119.0" y2="124.5" stroke="#bdbdbd" stroke-width="1.3"/>
<line x1="1114.4" y1="120.6" x2="1113.0" y2="122.0" stroke="#bdbdbd" stroke-width="1.3"/>
<line x1="1112.5" y1="116.0" x2="1110.5" y2="116.0" stroke="#bdbdbd" stroke-width="1.3"/>
<line x1="1114.4" y1="111.4" x2="1113.0" y2="110.0" stroke="#bdbdbd" stroke-width="1.3"/>
<line x1="1119.0" y1="109.5" x2="1119.0" y2="107.5" stroke="#bdbdbd" stroke-width="1.3"/>
<line x1="1123.6" y1="111.4" x2="1125.0" y2="110.0" stroke="#bdbdbd" stroke-width="1.3"/>
<path d="M1135,122 v-5 l1,1 l1,-4 l1,3 l1,-4 l1,4 l1,-5 l1,4 l1,-3 l1,4 l1,-5 l1,5 l1,-3 l1,3 l1,-2 l1,2 v5Z" fill="#bdbdbd"/>
<rect x="1160.5" y="109.5" width="15" height="13" fill="none" stroke="#bdbdbd"/><path d="M1165.5,109.5 v13 M1170.5,109.5 v13 M1160.5,113.8 h15 M1160.5,118.2 h15" stroke="#8a8a8a" stroke-width="0.8"/><path d="M1160.5,122.5 q8,0 8,-6 q0,-6 7,-7" fill="none" stroke="#bdbdbd" stroke-width="1.3"/>
<rect x="1184" y="108.5" width="16" height="14" fill="#8a8a8a" stroke="#bdbdbd"/><path d="M1184,122.5 L1200,108.5 V122.5Z" fill="#bdbdbd"/><path d="M1186,113 h5 M1188.5,110.5 v5 M1193,118.5 h5" stroke="#333" stroke-width="1.2"/>
<path d="M1207,109 h17 l-8.5,14Z" fill="#8e8e8e" stroke="#bdbdbd" stroke-width="0.8"/>
<rect x="1100.5" y="137.5" width="15" height="12" fill="#777" stroke="#bdbdbd"/><rect x="1101" y="143.5" width="14" height="5.5" fill="url(#gm)"/><path d="M1103,138 v5 M1107,138 v5 M1111,138 v5 M1115,138 v5" stroke="#9a9a9a" stroke-width="1.5"/>
<path d="M1131.5,136 v11 M1124,140 h15 M1131.5,134 l-2,3 h4Z" stroke="#bdbdbd" stroke-width="1.4" fill="#bdbdbd"/><path d="M1122.5,147 q2,4 5,0Z M1135.5,147 q2,4 5,0Z M1124,140 l-1.5,7 M1126,140 l1.5,7 M1137,140 l-1.5,7 M1139,140 l1.5,7" stroke="#bdbdbd" stroke-width="1" fill="#bdbdbd"/>
<rect x="1148.5" y="137.5" width="15" height="12" fill="#bdbdbd" stroke="#bdbdbd"/><rect x="1149.5" y="138.5" width="5" height="10" fill="#4a4a4a"/>
<rect x="1171" y="136" width="14" height="9" fill="#9a9a9a" stroke="#bdbdbd" stroke-width="0.8"/><circle cx="1176" cy="140" r="2.5" fill="#666" stroke="#bdbdbd"/><circle cx="1183" cy="146" r="5" fill="#8a8a8a" stroke="#bdbdbd" stroke-width="1"/>
<circle cx="1203" cy="139" r="4.5" fill="#bdbdbd"/><circle cx="1200" cy="145" r="4.5" fill="#bdbdbd"/><circle cx="1206" cy="145" r="4.5" fill="#bdbdbd"/><path d="M1200,141 h6 l-3,4Z" fill="#555"/>
<rect x="1220.5" y="137.5" width="15" height="12" fill="#3a3a3a" stroke="#bdbdbd"/><path d="M1220.5,141.5 h15 M1220.5,145.5 h15 M1225.5,137.5 v12 M1230.5,137.5 v12" stroke="#bdbdbd" stroke-width="1"/><rect x="1221" y="138" width="4" height="3" fill="#aaa"/>
<rect x="1112.5" y="164.5" width="15" height="12" fill="#777" stroke="#bdbdbd"/>
<rect x="1136.5" y="164.5" width="15" height="12" fill="#777" stroke="#bdbdbd"/>
<rect x="1160.5" y="164.5" width="15" height="12" fill="#777" stroke="#bdbdbd"/>
<rect x="1184.5" y="164.5" width="15" height="12" fill="#777" stroke="#bdbdbd"/>
<rect x="1208.5" y="164.5" width="15" height="12" fill="#777" stroke="#bdbdbd"/>
<path d="M1113,176 L1128,165 V176Z" fill="#bdbdbd"/><ellipse cx="1120.5" cy="170.5" rx="4" ry="3" fill="#666" transform="rotate(-35 1120.5 170.5)"/>
<defs><linearGradient id="pz" x1="0" y1="0" x2="1" y2="1"><stop offset="0" stop-color="#c0c0c0"/><stop offset="0.2" stop-color="#666"/><stop offset="0.4" stop-color="#c8c8c8"/><stop offset="0.6" stop-color="#777"/><stop offset="0.8" stop-color="#bbb"/><stop offset="1" stop-color="#888"/></linearGradient></defs><rect x="1137" y="165" width="14" height="11" fill="url(#pz)"/>
<rect x="1161" y="165" width="14" height="11" fill="#c4c4c4"/><path d="M1161,173 l3,-1 v-2 l3,-1 v-2 l3,-1 h5 v1.5 h-4 l-3,1 v2 l-3,1 v2 l-4,1.5Z M1167,175 h8" fill="#2a2a2a" stroke="#2a2a2a" stroke-width="0.6"/>
<path d="M1185,165 L1200,176 M1200,165 L1185,176" stroke="#bdbdbd" stroke-width="1"/><path d="M1185,165 L1192.5,170.5 L1185,176Z M1200,165 L1192.5,170.5 L1200,176Z" fill="#9a9a9a"/>
<defs><linearGradient id="gm" x1="0" x2="1"><stop offset="0" stop-color="#222"/><stop offset="1" stop-color="#aaa"/></linearGradient></defs>
<rect x="1209" y="165" width="14" height="11" fill="url(#gm)"/>
<circle cx="1081" cy="218" r="3" fill="none" stroke="#d0d0d0" stroke-width="1.3"/><path d="M1079,220 L1075,224" stroke="#d0d0d0" stroke-width="1.6"/>
<path d="M1122.5,220 L1127.5,220 L1125,217 Z M1122.5,222 L1127.5,222 L1125,225 Z" fill="#e0e0e0"/>
<path d="M1174.5,248 L1179.5,248 L1177,245 Z M1174.5,250 L1179.5,250 L1177,253 Z" fill="#e0e0e0"/>
<rect x="1144.5" y="215.5" width="12" height="10" fill="none" stroke="#bdbdbd"/><path d="M1146,224 l3,-4 l2,2 l2,-3 l2,5Z" fill="#bdbdbd"/><circle cx="1153" cy="218" r="1" fill="#bdbdbd"/>
<circle cx="1174" cy="220.5" r="5" fill="#bdbdbd"/><path d="M1170.5,224 L1177.5,217 A5,5 0 0 1 1170.5,224Z" fill="#555"/>
<text x="1198" y="226" text-anchor="middle" font-family="Liberation Serif" font-size="14" fill="#bdbdbd">T</text>
<rect x="1217.5" y="215.5" width="10" height="10" fill="none" stroke="#bdbdbd"/><circle cx="1217.5" cy="215.5" r="1.3" fill="#535353" stroke="#bdbdbd" stroke-width="0.8"/><circle cx="1227.5" cy="215.5" r="1.3" fill="#535353" stroke="#bdbdbd" stroke-width="0.8"/><circle cx="1217.5" cy="225.5" r="1.3" fill="#535353" stroke="#bdbdbd" stroke-width="0.8"/><circle cx="1227.5" cy="225.5" r="1.3" fill="#535353" stroke="#bdbdbd" stroke-width="0.8"/>
<path d="M1244.5,215.5 h5 l2,2 v8 h-7Z" fill="none" stroke="#bdbdbd"/><rect x="1241" y="220" width="5" height="7" fill="#bdbdbd"/>
<rect x="1266" y="212" width="9" height="17" fill="#3a3a3a" stroke="#333"/><rect x="1267" y="213" width="7" height="7" fill="#8a8a8a"/>
<path d="M1263.5,248.0 h5 l-2.5,3Z" fill="#ddd"/>
<path d="M1263.5,276.0 h5 l-2.5,3Z" fill="#ddd"/>
<rect x="1100.5" y="272.5" width="10" height="10" fill="#9a9a9a"/>
<rect x="1100.5" y="272.5" width="2" height="2" fill="#5a5a5a"/>
<rect x="1100.5" y="276.5" width="2" height="2" fill="#5a5a5a"/>
<rect x="1100.5" y="280.5" width="2" height="2" fill="#5a5a5a"/>
<rect x="1102.5" y="274.5" width="2" height="2" fill="#5a5a5a"/>
<rect x="1102.5" y="278.5" width="2" height="2" fill="#5a5a5a"/>
<rect x="1104.5" y="272.5" width="2" height="2" fill="#5a5a5a"/>
<rect x="1104.5" y="276.5" width="2" height="2" fill="#5a5a5a"/>
<rect x="1104.5" y="280.5" width="2" height="2" fill="#5a5a5a"/>
<rect x="1106.5" y="274.5" width="2" height="2" fill="#5a5a5a"/>
<rect x="1106.5" y="278.5" width="2" height="2" fill="#5a5a5a"/>
<rect x="1108.5" y="272.5" width="2" height="2" fill="#5a5a5a"/>
<rect x="1108.5" y="276.5" width="2" height="2" fill="#5a5a5a"/>
<rect x="1108.5" y="280.5" width="2" height="2" fill="#5a5a5a"/>
<path d="M1135,271 L1126,280" stroke="#bdbdbd" stroke-width="1.6"/><path d="M1126,279 q-3,0 -4,3 q3,1 5,-1Z" fill="#bdbdbd"/>
<path d="M1149.5,271 v12 M1143.5,277 h12" stroke="#bdbdbd" stroke-width="1.2"/><path d="M1149.5,270 l-2,2 h4Z M1149.5,284 l-2,-2 h4Z M1142.5,277 l2,-2 v4Z M1156.5,277 l-2,-2 v4Z" fill="#bdbdbd"/>
<rect x="1167" y="276" width="9" height="7" fill="#bdbdbd"/><path d="M1169,276 v-2 a2.5,2.5 0 0 1 5,0 v2" fill="none" stroke="#bdbdbd" stroke-width="1.3"/>
<path d="M1073.5,329 q6.5,-7 13,0 q-6.5,7 -13,0Z" fill="#bdbdbd"/><circle cx="1080" cy="329" r="3.2" fill="#4a4a4a"/><circle cx="1080" cy="329" r="2" fill="#7a7a7a"/>
<path d="M1073.5,368 q6.5,-7 13,0 q-6.5,7 -13,0Z" fill="#bdbdbd"/><circle cx="1080" cy="368" r="3.2" fill="#4a4a4a"/><circle cx="1080" cy="368" r="2" fill="#7a7a7a"/>
<path d="M1073.5,407 q6.5,-7 13,0 q-6.5,7 -13,0Z" fill="#bdbdbd"/><circle cx="1080" cy="407" r="3.2" fill="#4a4a4a"/><circle cx="1080" cy="407" r="2" fill="#7a7a7a"/>
<path d="M1073.5,446 q6.5,-7 13,0 q-6.5,7 -13,0Z" fill="#bdbdbd"/><circle cx="1080" cy="446" r="3.2" fill="#4a4a4a"/><circle cx="1080" cy="446" r="2" fill="#7a7a7a"/>
<path d="M1073.5,485 q6.5,-7 13,0 q-6.5,7 -13,0Z" fill="#bdbdbd"/><circle cx="1080" cy="485" r="3.2" fill="#4a4a4a"/><circle cx="1080" cy="485" r="2" fill="#7a7a7a"/>
<path d="M1073.5,524 q6.5,-7 13,0 q-6.5,7 -13,0Z" fill="#bdbdbd"/><circle cx="1080" cy="524" r="3.2" fill="#4a4a4a"/><circle cx="1080" cy="524" r="2" fill="#7a7a7a"/>
<path d="M1073.5,563 q6.5,-7 13,0 q-6.5,7 -13,0Z" fill="#bdbdbd"/><circle cx="1080" cy="563" r="3.2" fill="#4a4a4a"/><circle cx="1080" cy="563" r="2" fill="#7a7a7a"/>
<path d="M1073.5,602 q6.5,-7 13,0 q-6.5,7 -13,0Z" fill="#bdbdbd"/><circle cx="1080" cy="602" r="3.2" fill="#4a4a4a"/><circle cx="1080" cy="602" r="2" fill="#7a7a7a"/>
<path d="M1073.5,641 q6.5,-7 13,0 q-6.5,7 -13,0Z" fill="#bdbdbd"/><circle cx="1080" cy="641" r="3.2" fill="#4a4a4a"/><circle cx="1080" cy="641" r="2" fill="#7a7a7a"/>
<path d="M1073.5,680 q6.5,-7 13,0 q-6.5,7 -13,0Z" fill="#bdbdbd"/><circle cx="1080" cy="680" r="3.2" fill="#4a4a4a"/><circle cx="1080" cy="680" r="2" fill="#7a7a7a"/>
<path d="M1097.5,667 v-4.5 h4.5 M1123.5,662.5 h4.5 v4.5 M1128,693 v4.5 h-4.5 M1102,697.5 h-4.5 v-4.5" fill="none" stroke="#f0f0f0" stroke-width="1"/>
<rect x="1107.9" y="333.9" width="2" height="2" fill="#e02020"/>
<rect x="1105.7" y="362" width="2" height="2" fill="#f59a10"/>
<rect x="1104.8" y="402.5" width="2" height="2" fill="#f59a10"/>
<rect x="1104.2" y="446.1" width="2" height="2" fill="#f59a10"/>
<rect x="1107.3" y="486.4" width="2" height="2" fill="#f59a10"/>
<rect x="1115" y="516.8" width="2" height="2" fill="#f59a10"/>
<rect x="1114.6" y="558.8" width="2" height="2" fill="#f59a10"/>
<rect x="1107.3" y="596.5" width="2" height="2" fill="#f59a10"/>
<rect x="1112.5" y="638.6" width="2" height="2" fill="#2030d0"/>
<rect x="1109.7" y="672.8" width="2" height="2" fill="#1020e0"/>
<path d="M1077,712 h4 M1083,712 h4" stroke="#a8a8a8" stroke-width="1"/><rect x="1074.5" y="709.5" width="7" height="5" rx="2.5" fill="none" stroke="#a8a8a8" stroke-width="1.3"/><rect x="1081.5" y="709.5" width="7" height="5" rx="2.5" fill="none" stroke="#a8a8a8" stroke-width="1.3"/>
<text x="1110" y="716" text-anchor="middle" font-family="Liberation Serif" font-style="italic" font-weight="bold" font-size="13" fill="#a8a8a8">fx</text><path d="M1116,715 h3 l-1.5,2Z" fill="#ddd"/>
<rect x="1130" y="707" width="14" height="10" fill="#a8a8a8"/><circle cx="1137" cy="712" r="3" fill="#535353"/>
<circle cx="1162" cy="712" r="5" fill="#a8a8a8"/><path d="M1158.5,715.5 L1165.5,708.5 A5,5 0 0 1 1158.5,715.5Z" fill="#535353"/>
<path d="M1184,708 h5 l1,1.5 h7 v8 h-13Z" fill="#a8a8a8"/>
<path d="M1213,708 h9 v10 h-9Z" fill="#a8a8a8"/><path d="M1213,708 l3,3 v-3Z" fill="#535353"/>
<rect x="1240" y="709" width="9" height="9" fill="none" stroke="#a8a8a8" stroke-width="1.2"/><path d="M1238,708 h13 M1243,706.5 h3 M1242.5,711 v5 M1246.5,711 v5" stroke="#a8a8a8" stroke-width="1.2"/></svg>
</body></html>
